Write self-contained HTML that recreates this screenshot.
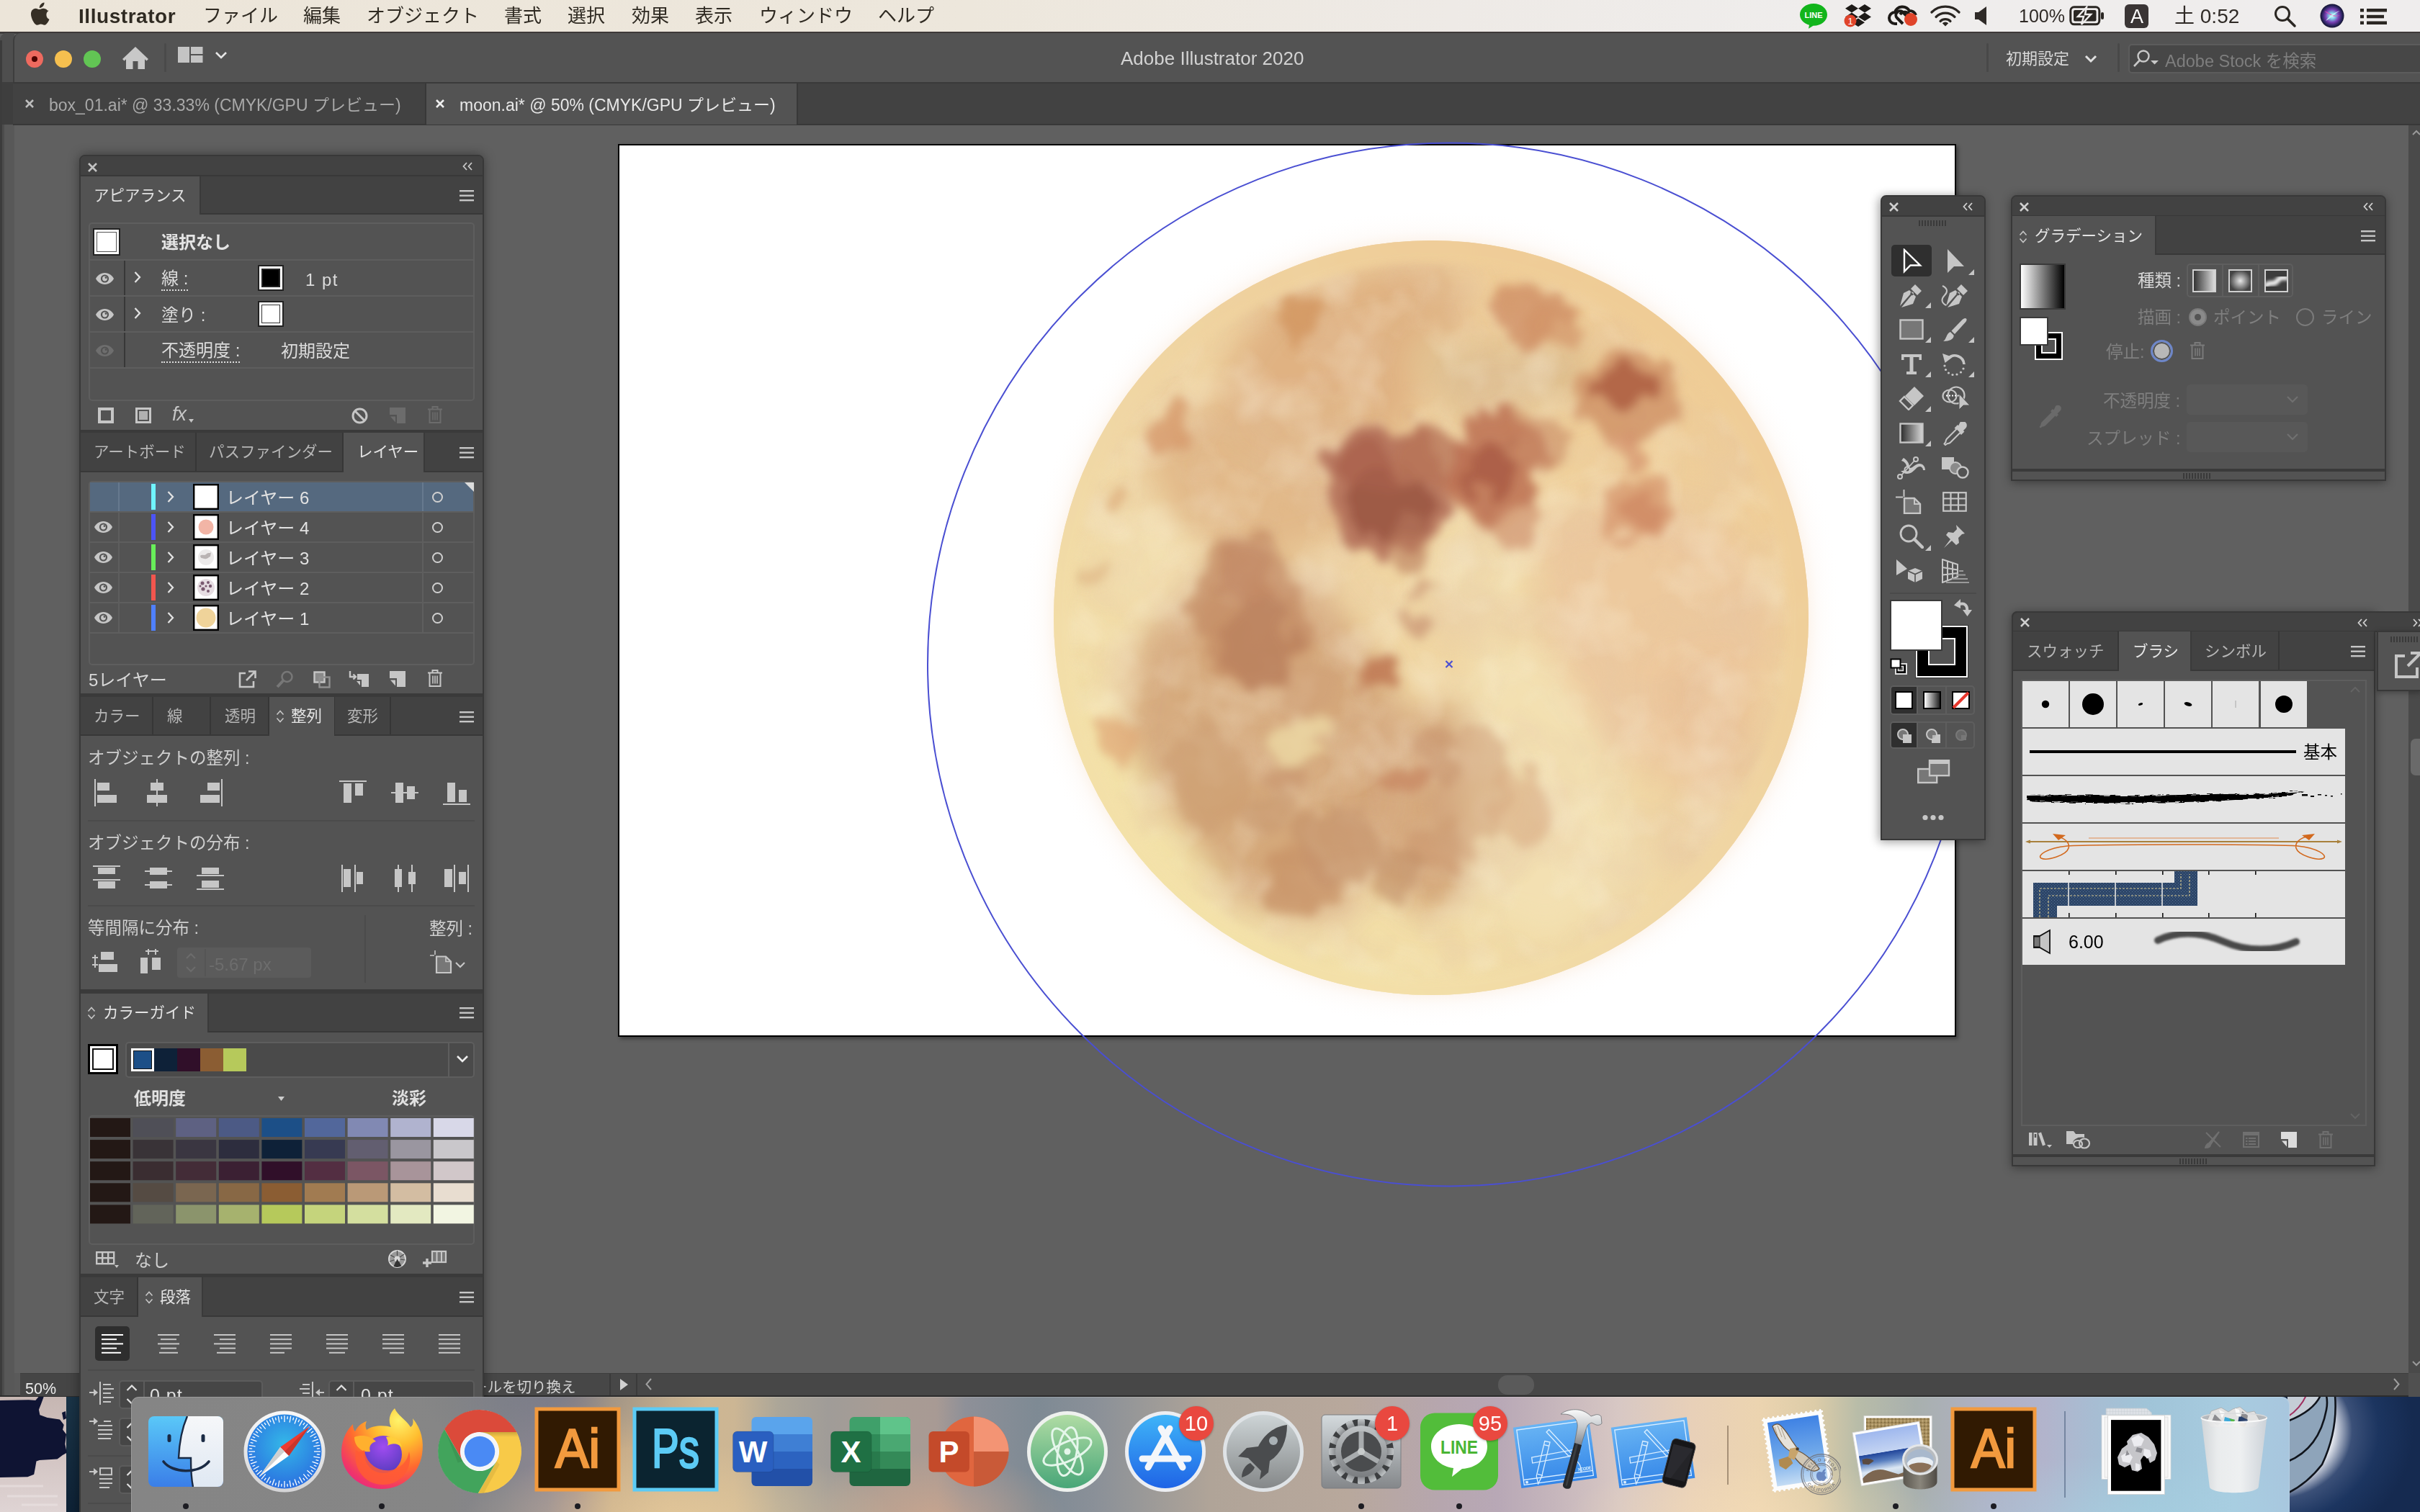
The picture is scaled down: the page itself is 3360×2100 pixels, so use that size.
<!DOCTYPE html>
<html lang="ja"><head><meta charset="utf-8"><title>Adobe Illustrator 2020</title>
<style>
html,body{margin:0;padding:0}
body{width:3360px;height:2100px;overflow:hidden;position:relative;background:#606060;font-family:"Liberation Sans","Noto Sans CJK JP",sans-serif;-webkit-font-smoothing:antialiased}
div,span,svg{position:absolute;box-sizing:border-box}
.t{white-space:nowrap;will-change:transform}
.pn{background:#535353;border:2px solid #383838;box-shadow:0 0 14px rgba(0,0,0,.35)}
.hd{background:#424242;border-bottom:2px solid #383838}
.tabs{background:#424242;border-bottom:2px solid #383838}
.tab{background:#424242;border-right:2px solid #3a3a3a;border-bottom:2px solid #383838;height:100%;top:0}
.tab.on{background:#535353;border-bottom:0}
.bx{border:2px solid #626262;border-radius:5px}
.ln{background:#4a4a4a}
</style>
</head>
<body>
<div style="left:0px;top:1938px;width:3360px;height:162px;background:#14243f;"></div>
<svg style="left:0px;top:1938px;" width="112" height="162" viewBox="0 0 112 162">
<defs><linearGradient id="wl" x1="0" y1="0" x2="0" y2="1"><stop offset="0" stop-color="#c6b6b2"/><stop offset=".5" stop-color="#d2c4c2"/><stop offset="1" stop-color="#dfd4d4"/></linearGradient><linearGradient id="wn" x1="0" y1="0" x2="0" y2="1"><stop offset="0" stop-color="#1a3447"/><stop offset="1" stop-color="#0e2236"/></linearGradient></defs>
<rect width="112" height="162" fill="url(#wl)"/>
<rect x="92" width="20" height="162" fill="url(#wn)"/>
<path d="M0 8.100L39.700 7.300 49.600 8.100 54.500 2.300 59.500 2.300 56.200 11.400 52.900 19.700 54.500 28 66.100 32.100 82.600 34.600 87.600 41.200 86 47.800 91 54.400 89.300 67.600 91.700 79.200 86 82.500 79.300 87.500 54.500 89.100 49.600 90.800 47.900 100.700 46.300 109 38 112.300 0 113.100Z" fill="#0f1433" stroke="#0f1433" stroke-width="2" stroke-linejoin="round"/>
<path d="M86 24l5 -2l1 10l-4 2z" fill="#0f1433"/>
<path d="M0 126h60M10 140h70M30 152h50" stroke="#ebe3e3" stroke-width="3" opacity=".6"/>
</svg>
<svg style="left:3176px;top:1938px;" width="184" height="162" viewBox="0 0 184 162">
<defs><radialGradient id="wg" cx="-0.1" cy="0.300" r="1.050"><stop offset="0" stop-color="#e8ecf2"/><stop offset=".42" stop-color="#eceef4"/><stop offset=".56" stop-color="#3b5078"/><stop offset=".75" stop-color="#1c3560"/><stop offset="1" stop-color="#152a50"/></radialGradient></defs>
<rect width="184" height="162" fill="url(#wg)"/>
<path d="M0 0 L66 0 Q70 50 48 96 Q28 122 0 136 Z" fill="#8ea4ba"/>
<path d="M0 0 L46 0 Q36 22 0 36 Z" fill="#c5cdd6"/>
<path d="M0 36 Q36 22 46 0 M0 92 Q44 74 54 20 Q56 10 54 0 M0 136 Q28 122 48 96 Q70 50 66 0" fill="none" stroke="#10141c" stroke-width="2.600"/>
<path d="M0 30 Q18 18 26 0" fill="none" stroke="#a03060" stroke-width="2"/>
</svg>
<div style="left:0px;top:0px;width:3360px;height:44px;background:linear-gradient(90deg,#ece5d9 0,#ede7dc 40%,#eeeae6 60%,#efedec 75%,#efeded 100%);"></div>
<div style="left:0px;top:44px;width:3360px;height:3px;background:linear-gradient(#3a3332,#444);"></div>
<svg style="left:42px;top:3px;" width="28" height="34" viewBox="0 0 28 34"><path d="M19.2 5.4c1.3-1.6 2.2-3.7 1.9-5.4-1.9.1-4.100 1.300-5.400 2.900-1.200 1.400-2.200 3.500-1.900 5.400 2.100.1 4.100-1.200 5.400-2.900zM24.600 24.300c-.9 2-1.400 2.900-2.500 4.700-1.600 2.500-3.900 5.500-6.700 5.500-2.500 0-3.100-1.600-6.500-1.600-3.400 0-4.100 1.600-6.600 1.600" fill="none"/><path d="M20.900 0c.2 1.900-.6 3.800-1.700 5.200-1.200 1.500-3.200 2.700-5.100 2.600-.3-1.900.6-3.800 1.700-5.100C17 1.200 19.200.1 20.900 0zM27.300 11.600c-.3.200-3.400 2-3.400 5.900 0 4.600 4 6.200 4.100 6.200 0 .1-.6 2.200-2.100 4.400-1.300 1.900-2.700 3.800-4.800 3.800-2.100 0-2.700-1.200-5.100-1.200-2.400 0-3.200 1.300-5.100 1.300-2.100 0-3.600-2-4.900-3.900C3.300 24.200 2 19.200 2 16.400c0-5.200 3.400-8 6.700-8 2.100 0 3.800 1.400 5.100 1.400 1.300 0 3.200-1.500 5.600-1.500.9 0 4.200.1 6.400 3.200z" fill="#362f25" transform="translate(-1,0.5) scale(0.98)"/></svg>
<span class="t" style="top:2.0px;font-size:28px;line-height:42px;color:#2f2a22;font-weight:700;letter-spacing:0.55px;left:109px;">Illustrator</span>
<span class="t" style="top:3.0px;font-size:26px;line-height:39px;color:#2f2a22;left:282px;">ファイル</span>
<span class="t" style="top:3.0px;font-size:26px;line-height:39px;color:#2f2a22;left:421px;">編集</span>
<span class="t" style="top:3.0px;font-size:26px;line-height:39px;color:#2f2a22;left:509px;">オブジェクト</span>
<span class="t" style="top:3.0px;font-size:26px;line-height:39px;color:#2f2a22;left:700px;">書式</span>
<span class="t" style="top:3.0px;font-size:26px;line-height:39px;color:#2f2a22;left:788px;">選択</span>
<span class="t" style="top:3.0px;font-size:26px;line-height:39px;color:#2f2a22;left:877px;">効果</span>
<span class="t" style="top:3.0px;font-size:26px;line-height:39px;color:#2f2a22;left:965px;">表示</span>
<span class="t" style="top:3.0px;font-size:26px;line-height:39px;color:#2f2a22;left:1054px;">ウィンドウ</span>
<span class="t" style="top:3.0px;font-size:26px;line-height:39px;color:#2f2a22;left:1219px;">ヘルプ</span>
<svg style="left:2498px;top:4px;" width="40" height="36" viewBox="0 0 40 36"><path d="M20 1C9.500 1 1 7.800 1 16.200c0 6.700 5.400 12.300 13 14.500l-1 5 6.500-4c.2 0 .3 0 .5 0 10.500 0 19-6.800 19-15.500C39 7.800 30.500 1 20 1z" fill="#12b51c"/><text x="20" y="20.500" font-family="Liberation Sans,sans-serif" font-weight="700" font-size="11" fill="#fff" text-anchor="middle">LINE</text></svg>
<svg style="left:2560px;top:5px;" width="40" height="34" viewBox="0 0 40 34"><g fill="#1d1a17"><path d="M11 1l9 5.800-9 5.800-9-5.800zM29 1l9 5.800-9 5.800-9-5.800zM2 18.400l9-5.800 9 5.800-9 5.800zM29 12.600l9 5.800-9 5.800-9-5.800zM11 26.200l9-5.800 9 5.800-9 5.800z"/></g><circle cx="9" cy="24" r="8.500" fill="#e0442a"/><text x="9" y="29" font-family="Liberation Sans,sans-serif" font-size="13" fill="#fff" text-anchor="middle">1</text></svg>
<svg style="left:2620px;top:6px;" width="44" height="32" viewBox="0 0 44 32"><g fill="none" stroke="#1d1a17" stroke-width="4"><path d="M14 27h-3a8 8 0 0 1 0-16 11 11 0 0 1 20-2 9 9 0 0 1 9 6"/><path d="M22 27l-8-8a5.500 5.500 0 0 1 8-8l6 6"/><path d="M18 14a8 8 0 0 1 14 2"/></g><circle cx="33" cy="21" r="9" fill="#e0442a"/></svg>
<svg style="left:2680px;top:6px;" width="42" height="32" viewBox="0 0 42 32"><g fill="none" stroke="#2a2622" stroke-width="3.200" stroke-linecap="round"><path d="M2 11a27 27 0 0 1 38 0"/><path d="M8 17.500a18.500 18.500 0 0 1 26 0"/><path d="M14 23.500a10 10 0 0 1 14 0"/></g><path d="M21 30.500l-4.200-4.300a6 6 0 0 1 8.400 0z" fill="#2a2622"/></svg>
<svg style="left:2741px;top:9px;" width="20" height="26" viewBox="0 0 20 26"><path d="M1 8h5l11-8v26l-11-8h-5z" fill="#2f2b28"/></svg>
<span class="t" style="top:4.0px;font-size:25px;line-height:37px;color:#2f2a26;left:2803px;">100%</span>
<svg style="left:2873px;top:8px;" width="50" height="28" viewBox="0 0 50 28"><rect x="1.800" y="1.800" width="40" height="24" rx="5" fill="none" stroke="#2a2622" stroke-width="3"/><rect x="44" y="9" width="4" height="10" rx="2" fill="#2a2622"/><rect x="6" y="6" width="31.500" height="15.500" rx="2" fill="#2a2622"/><path d="M24 2l-12 13h8l-3 11 13-14h-8z" fill="#2a2622" stroke="#efedec" stroke-width="2.500"/></svg>
<div style="left:2950px;top:6px;width:33px;height:33px;background:#3a3535;border-radius:6px"></div>
<span class="t" style="top:2.5px;font-size:27px;line-height:40px;color:#fff;left:2966.5px;transform:translateX(-50%);">A</span>
<span class="t" style="top:1.5px;font-size:28px;line-height:42px;color:#2f2a26;left:3019px;">土 0:52</span>
<svg style="left:3157px;top:7px;" width="32" height="32" viewBox="0 0 32 32"><circle cx="12" cy="12" r="9.500" fill="none" stroke="#2a2622" stroke-width="3"/><path d="M19 19l10 10" stroke="#2a2622" stroke-width="3.500" stroke-linecap="round"/></svg>
<svg style="left:3221px;top:5px;" width="34" height="34" viewBox="0 0 34 34"><defs><radialGradient id="sr" cx=".5" cy=".5" r=".5"><stop offset="0" stop-color="#e8f4ff"/><stop offset=".25" stop-color="#7fd0e8"/><stop offset=".55" stop-color="#7a3fb4"/><stop offset=".85" stop-color="#27235c"/><stop offset="1" stop-color="#15132e"/></radialGradient></defs><circle cx="17" cy="17" r="16.500" fill="url(#sr)"/><path d="M6 10c6 2 14 9 22 6-6 4-14 1-22-6z" fill="#e850b0" opacity=".8"/><path d="M8 24c6-8 12-12 20-14-8 4-12 10-20 14z" fill="#c8f4f4" opacity=".85"/></svg>
<svg style="left:3277px;top:11px;" width="38" height="24" viewBox="0 0 38 24"><g fill="#2a2622"><rect x="0" y="1" width="5" height="4.500"/><rect x="9" y="1" width="28" height="4.500"/><rect x="0" y="9.800" width="5" height="4.500"/><rect x="9" y="9.800" width="24" height="4.500"/><rect x="0" y="18.500" width="5" height="4.500"/><rect x="9" y="18.500" width="28" height="4.500"/></g></svg>
<div style="left:0px;top:46px;width:20px;height:1894px;background:#585858;border-radius:9px 0 0 0"></div>
<div style="left:0px;top:46px;width:20px;height:68px;background:#4e4e4e;border-radius:9px 0 0 0"></div>
<div style="left:0px;top:114px;width:20px;height:59px;background:#3e3e3e;"></div>
<div style="left:0px;top:56px;width:3px;height:1884px;background:#3c3c3c;"></div>
<div style="left:3px;top:173px;width:3px;height:1767px;background:#4c4c4c;"></div>
<div style="left:18px;top:46px;width:3342px;height:69px;background:#535353;border-radius:10px 0 0 0;border-left:2px solid #3e3e3e"></div>
<div style="left:18px;top:114px;width:3342px;height:59px;background:#424242;border-top:2px solid #3a3a3a"></div>
<div style="left:18px;top:172px;width:3342px;height:2px;background:#383838;"></div>
<div style="left:36px;top:70px;width:24px;height:24px;background:#ee6a5f;border-radius:50%"></div>
<div style="left:44px;top:78px;width:8px;height:8px;background:#4d0400;border-radius:50%"></div>
<div style="left:76px;top:70px;width:24px;height:24px;background:#f5bf4f;border-radius:50%"></div>
<div style="left:116px;top:70px;width:24px;height:24px;background:#62c554;border-radius:50%"></div>
<svg style="left:169px;top:64px;" width="38" height="33" viewBox="0 0 38 33"><path d="M19 1L1 18l2.500 2.600L6 18.300V32h9.500V21h7v11H32V18.300l2.500 2.300L37 18z" fill="#c8c8c8"/></svg>
<div style="left:228px;top:60px;width:3px;height:40px;background:#4a4a4a;border-radius:2px"></div>
<svg style="left:247px;top:65px;" width="36" height="24" viewBox="0 0 36 24"><g fill="#c4c4c4"><rect x="0" y="0" width="16" height="22"/><rect x="18" y="0" width="16.500" height="10"/><rect x="18" y="12" width="16.500" height="10"/></g></svg>
<svg style="left:298px;top:71px;" width="18" height="12" viewBox="0 0 18 12"><path d="M2 2l7 7 7-7" fill="none" stroke="#e6e6e6" stroke-width="2.600"/></svg>
<span class="t" style="top:61.5px;font-size:26px;line-height:39px;color:#d2d2d2;left:1556px;">Adobe Illustrator 2020</span>
<div style="left:2758px;top:60px;width:3px;height:40px;background:#484848;border-radius:2px"></div>
<span class="t" style="top:65.0px;font-size:22px;line-height:33px;color:#d8d8d8;left:2785px;">初期設定</span>
<svg style="left:2894px;top:76px;" width="18" height="13" viewBox="0 0 18 13"><path d="M2 2l7 7 7-7" fill="none" stroke="#e0e0e0" stroke-width="3"/></svg>
<div style="left:2940px;top:60px;width:3px;height:40px;background:#484848;border-radius:2px"></div>
<div style="left:2955px;top:61px;width:420px;height:41px;background:#474747;border:2px solid #5c5c5c;border-radius:5px"></div>
<svg style="left:2962px;top:69px;" width="36" height="26" viewBox="0 0 36 26"><circle cx="14" cy="9" r="7.500" fill="none" stroke="#c8c8c8" stroke-width="2.400"/><path d="M9 14.500L1 23" stroke="#c8c8c8" stroke-width="2.600"/><path d="M24 15h11l-5.500 5.500z" fill="#c8c8c8"/></svg>
<span class="t" style="top:67.5px;font-size:23.5px;line-height:35px;color:#7e7e7e;left:3006px;">Adobe Stock を検索</span>
<div style="left:20px;top:116px;width:754px;height:56px;background:#424242;border-right:2px solid #383838"></div>
<div style="left:590px;top:116px;width:518px;height:57px;background:#535353;border-right:2px solid #383838;border-left:2px solid #383838"></div>
<svg style="left:35px;top:138px;" width="12" height="12" viewBox="0 0 12 12"><path d="M1 1l10 10M11 1L1 11" stroke="#bdbdbd" stroke-width="2.600"/></svg>
<span class="t" style="top:129.0px;font-size:23px;line-height:34px;color:#a9a9a9;left:68px;">box_01.ai* @ 33.33% (CMYK/GPU プレビュー)</span>
<svg style="left:605px;top:138px;" width="12" height="12" viewBox="0 0 12 12"><path d="M1 1l10 10M11 1L1 11" stroke="#f0f0f0" stroke-width="2.600"/></svg>
<span class="t" style="top:129.0px;font-size:23px;line-height:34px;color:#e8e8e8;left:638px;">moon.ai* @ 50% (CMYK/GPU プレビュー)</span>
<div style="left:20px;top:174px;width:3324px;height:1733px;overflow:hidden"><div style="left:838px;top:26px;width:1858px;height:1240px;background:#fff;border:2px solid #000;box-shadow:3px 3px 5px rgba(0,0,0,.35)"></div><svg style="left:1380px;top:96px" width="1180" height="1180" viewBox="1400 270 1180 1180">
<defs>
<radialGradient id="mg" cx="1987" cy="858" r="570" gradientUnits="userSpaceOnUse"><stop offset="0" stop-color="#f8e2cc" stop-opacity=".4"/><stop offset=".915" stop-color="#f8e2cc" stop-opacity=".4"/><stop offset=".945" stop-color="#faeade" stop-opacity=".16"/><stop offset="1" stop-color="#fff" stop-opacity="0"/></radialGradient>
<linearGradient id="mb" x1="2300" y1="450" x2="1600" y2="1300" gradientUnits="userSpaceOnUse"><stop offset="0" stop-color="#efcc96"/><stop offset=".5" stop-color="#f0d6a4"/><stop offset="1" stop-color="#f4e3aa"/></linearGradient>
<clipPath id="mc"><circle cx="1987" cy="858" r="524"/></clipPath>
<filter id="bl1" x="-10%" y="-10%" width="120%" height="120%"><feGaussianBlur stdDeviation="22"/></filter>
<filter id="bl2" x="-10%" y="-10%" width="120%" height="120%"><feTurbulence type="fractalNoise" baseFrequency=".022" numOctaves="3" seed="7" result="n"/><feDisplacementMap in="SourceGraphic" in2="n" scale="70" xChannelSelector="R" yChannelSelector="G" result="d"/><feGaussianBlur in="d" stdDeviation="7"/></filter>
<filter id="bl3" x="-5%" y="-5%" width="110%" height="110%"><feGaussianBlur stdDeviation="6"/></filter>
<filter id="cl" x="0" y="0" width="100%" height="100%"><feTurbulence type="fractalNoise" baseFrequency=".009" numOctaves="3" seed="11"/><feColorMatrix type="matrix" values="0 0 0 0 .78  0 0 0 0 .56  0 0 0 0 .38  1.600 0 0 0 -.62"/></filter>
<filter id="cl2" x="0" y="0" width="100%" height="100%"><feTurbulence type="fractalNoise" baseFrequency=".012" numOctaves="3" seed="23"/><feColorMatrix type="matrix" values="0 0 0 0 .97  0 0 0 0 .91  0 0 0 0 .74  0 1.600 0 0 -.7"/></filter>
</defs>
<circle cx="1987" cy="858" r="570" fill="url(#mg)"/>
<circle cx="1987" cy="858" r="524" fill="url(#mb)"/>
<g clip-path="url(#mc)"><g filter="url(#bl1)"><path d="M1776 408 L1954 363 L2024 393 L2044 448 L1954 478 L1974 567 L1905 626 L1815 656 L1726 616 L1687 547 L1726 468Z" fill="#deb081" opacity="0.95"/><path d="M1657 567 L1875 547 L1974 636 L1875 745 L1736 785 L1627 726 L1587 626Z" fill="#e0b686" opacity="0.9"/><path d="M1587 874 L1677 775 L1815 795 L1895 894 L1954 993 L1944 1152 L1855 1271 L1726 1261 L1617 1152 L1558 1013Z" fill="#d2a478" opacity="0.92"/><path d="M1875 1033 L2014 973 L2113 1033 L2153 1132 L2093 1231 L1974 1271 L1895 1192Z" fill="#d0a074" opacity="0.85"/><path d="M2133 735 L2252 696 L2411 735 L2470 874 L2430 1033 L2331 1093 L2212 1033 L2153 894Z" fill="#ebc49c" opacity="0.62"/><path d="M2053 874 L2153 914 L2232 1033 L2292 1212 L2153 1311 L2044 1261 L2024 1073Z" fill="#f2e0b2" opacity="0.95"/><path d="M1488 934 L1587 1073 L1726 1271 L1895 1370 L1994 1383 L1756 1331 L1558 1152 L1473 973Z" fill="#f4e3aa" opacity="0.9"/><path d="M1558 696 L1657 735 L1677 815 L1597 874 L1518 815Z" fill="#f2dfb0" opacity="0.8"/><path d="M1994 735 L2093 716 L2133 795 L2073 874 L1994 854Z" fill="#f2e0b0" opacity="0.8"/><path d="M1954 478 L2212 478 L2192 557 L2014 577Z" fill="#d9ba8c" opacity="0.8"/><path d="M2311 934 L2411 914 L2430 1073 L2351 1132Z" fill="#e8bc92" opacity="0.7"/></g><rect x="1440" y="320" width="1100" height="1080" filter="url(#cl)" opacity=".55"/><rect x="1440" y="320" width="1100" height="1080" filter="url(#cl2)" opacity=".5"/><g filter="url(#bl2)"><ellipse cx="1801" cy="443" rx="22" ry="36" fill="#d2955f" opacity="0.8" transform="rotate(-20 1801 443)"/><ellipse cx="1629" cy="587" rx="20" ry="40" fill="#d6996a" opacity="0.8" transform="rotate(25 1629 587)"/><ellipse cx="1558" cy="696" rx="12" ry="26" fill="#dca878" opacity="0.7" transform="rotate(15 1558 696)"/><ellipse cx="1520" cy="795" rx="12" ry="22" fill="#dcb080" opacity="0.6" transform="rotate(15 1520 795)"/><ellipse cx="2123" cy="433" rx="62" ry="42" fill="#cc8860" opacity="0.72" transform="rotate(15 2123 433)"/><ellipse cx="2153" cy="458" rx="40" ry="26" fill="#d29468" opacity="0.7" transform="rotate(20 2153 458)"/><ellipse cx="1999" cy="413" rx="18" ry="38" fill="#dfb585" opacity="0.7" transform="rotate(0 1999 413)"/><ellipse cx="2262" cy="549" rx="72" ry="64" fill="#d09468" opacity="0.85" transform="rotate(-20 2262 549)"/><ellipse cx="2255" cy="542" rx="36" ry="32" fill="#b06244" opacity="0.9" transform="rotate(-20 2255 542)"/><ellipse cx="2267" cy="631" rx="30" ry="30" fill="#d69670" opacity="0.75" transform="rotate(0 2267 631)"/><ellipse cx="2272" cy="706" rx="52" ry="40" fill="#d6966e" opacity="0.75" transform="rotate(-10 2272 706)"/><ellipse cx="2276" cy="712" rx="28" ry="20" fill="#cc8460" opacity="0.65" transform="rotate(-10 2276 712)"/><ellipse cx="1923" cy="681" rx="88" ry="92" fill="#b4705a" opacity="0.9" transform="rotate(-25 1923 681)"/><ellipse cx="1931" cy="696" rx="50" ry="56" fill="#9a5543" opacity="0.85" transform="rotate(-25 1931 696)"/><ellipse cx="1895" cy="646" rx="40" ry="34" fill="#a8604a" opacity="0.7" transform="rotate(0 1895 646)"/><ellipse cx="1989" cy="641" rx="56" ry="40" fill="#b87458" opacity="0.8" transform="rotate(0 1989 641)"/><ellipse cx="1954" cy="760" rx="30" ry="40" fill="#b87a5c" opacity="0.6" transform="rotate(10 1954 760)"/><ellipse cx="2077" cy="648" rx="66" ry="72" fill="#bc7052" opacity="0.85" transform="rotate(10 2077 648)"/><ellipse cx="2073" cy="654" rx="36" ry="42" fill="#a85a42" opacity="0.8" transform="rotate(10 2073 654)"/><ellipse cx="2133" cy="616" rx="40" ry="40" fill="#c88a66" opacity="0.6" transform="rotate(0 2133 616)"/><ellipse cx="2101" cy="731" rx="30" ry="30" fill="#d09470" opacity="0.7" transform="rotate(0 2101 731)"/><ellipse cx="1736" cy="850" rx="78" ry="108" fill="#c0845e" opacity="0.62" transform="rotate(-10 1736 850)"/><ellipse cx="1748" cy="899" rx="48" ry="60" fill="#b47856" opacity="0.5" transform="rotate(0 1748 899)"/><ellipse cx="1726" cy="805" rx="40" ry="44" fill="#b87858" opacity="0.4" transform="rotate(0 1726 805)"/><ellipse cx="1801" cy="1033" rx="42" ry="24" fill="#ecd8a4" opacity="0.8" transform="rotate(-35 1801 1033)"/><ellipse cx="1786" cy="1085" rx="30" ry="26" fill="#c8946c" opacity="0.7" transform="rotate(0 1786 1085)"/><ellipse cx="1809" cy="1223" rx="54" ry="48" fill="#c89468" opacity="0.8" transform="rotate(35 1809 1223)"/><ellipse cx="1947" cy="1085" rx="28" ry="24" fill="#c88a64" opacity="0.8" transform="rotate(0 1947 1085)"/><ellipse cx="1923" cy="934" rx="24" ry="22" fill="#c07a54" opacity="0.9" transform="rotate(0 1923 934)"/><ellipse cx="1958" cy="869" rx="18" ry="18" fill="#cc9a78" opacity="0.8" transform="rotate(0 1958 869)"/><ellipse cx="1984" cy="821" rx="16" ry="16" fill="#cc9a78" opacity="0.8" transform="rotate(0 1984 821)"/><ellipse cx="1548" cy="1031" rx="22" ry="38" fill="#e0a878" opacity="0.7" transform="rotate(-20 1548 1031)"/><ellipse cx="1984" cy="1175" rx="30" ry="42" fill="#cc9870" opacity="0.7" transform="rotate(0 1984 1175)"/><ellipse cx="2044" cy="1097" rx="50" ry="90" fill="#d0a27a" opacity="0.6" transform="rotate(10 2044 1097)"/><ellipse cx="2113" cy="1122" rx="36" ry="56" fill="#d8ac84" opacity="0.6" transform="rotate(-20 2113 1122)"/><ellipse cx="1855" cy="1172" rx="64" ry="50" fill="#c4926a" opacity="0.65" transform="rotate(20 1855 1172)"/><ellipse cx="1677" cy="1073" rx="54" ry="74" fill="#cc9c72" opacity="0.6" transform="rotate(-20 1677 1073)"/><ellipse cx="1944" cy="1212" rx="40" ry="36" fill="#c08c64" opacity="0.6" transform="rotate(0 1944 1212)"/><ellipse cx="1756" cy="1132" rx="36" ry="30" fill="#c89870" opacity="0.5" transform="rotate(0 1756 1132)"/><ellipse cx="1994" cy="1053" rx="34" ry="30" fill="#c4906a" opacity="0.55" transform="rotate(0 1994 1053)"/><ellipse cx="1815" cy="954" rx="40" ry="36" fill="#d0a078" opacity="0.5" transform="rotate(0 1815 954)"/></g>
<circle cx="1984" cy="862" r="520" fill="none" stroke="url(#mb)" stroke-width="44" opacity=".92" filter="url(#bl3)"/></g>
</svg><svg style="left:0;top:0" width="3324" height="1733" viewBox="20 174 3324 1733"><circle cx="2012.500" cy="923" r="724.500" fill="none" stroke="#4a4fd2" stroke-width="2"/><path d="M2007.500 918l9 9m0-9l-9 9" stroke="#4a4fd2" stroke-width="2.200"/></svg></div>
<div style="left:3344px;top:174px;width:16px;height:1733px;background:#4a4a4a;"></div>
<div style="left:3347px;top:1026px;width:13px;height:51px;background:#6a6a6a;border-radius:7px 0 0 7px"></div>
<svg style="left:3349px;top:180px;" width="11" height="8" viewBox="0 0 11 8"><path d="M1 7l5-5 5 5" fill="none" stroke="#9a9a9a" stroke-width="2"/></svg>
<svg style="left:3349px;top:1890px;" width="11" height="8" viewBox="0 0 11 8"><path d="M1 1l5 5 5-5" fill="none" stroke="#9a9a9a" stroke-width="2"/></svg>
<div style="left:28px;top:1907px;width:3332px;height:33px;background:#474747;border-top:1px solid #3e3e3e"></div>
<div style="left:20px;top:1907px;width:8px;height:33px;background:#5a5a5a;"></div>
<div style="left:0px;top:1938px;width:3360px;height:2px;background:#2c2c2c;"></div>
<div style="left:28px;top:1908px;width:84px;height:31px;background:#454545;"></div>
<span class="t" style="top:1912.5px;font-size:21.5px;line-height:32px;color:#ececec;left:35px;">50%</span>
<span class="t" style="top:1911.5px;font-size:20.5px;line-height:30px;color:#d4d4d4;left:656px;">ールを切り換え</span>
<div style="left:846px;top:1908px;width:2px;height:30px;background:#3a3a3a;"></div>
<svg style="left:861px;top:1915px;" width="12" height="16" viewBox="0 0 12 16"><path d="M0 0l11 8-11 8z" fill="#d0d0d0"/></svg>
<div style="left:883px;top:1908px;width:2px;height:30px;background:#3a3a3a;"></div>
<svg style="left:896px;top:1914px;" width="10" height="17" viewBox="0 0 10 17"><path d="M8 1L1.500 8.500 8 16" fill="none" stroke="#a0a0a0" stroke-width="2"/></svg>
<svg style="left:3322px;top:1914px;" width="10" height="17" viewBox="0 0 10 17"><path d="M2 1l6.500 7.500L2 16" fill="none" stroke="#a0a0a0" stroke-width="2"/></svg>
<div style="left:2080px;top:1910px;width:50px;height:27px;background:#5a5a5a;border-radius:13px"></div>
<div style="left:3344px;top:1907px;width:16px;height:33px;background:#505050;"></div>
<div style="left:110px;top:215px;width:562px;height:1900px;background:#535353;border:2px solid #383838;border-radius:8px 8px 0 0;box-shadow:0 0 16px rgba(0,0,0,.4)"></div>
<div style="left:112px;top:217px;width:558px;height:28px;background:#424242;border-bottom:2px solid #383838;border-radius:6px 6px 0 0"></div>
<svg style="left:122px;top:226px;" width="13" height="13" viewBox="0 0 13 13"><path d="M1 1l11 11M12 1L1 12" stroke="#c2c2c2" stroke-width="2.600"/></svg>
<svg style="left:642px;top:225px;" width="15" height="12" viewBox="0 0 15 12"><path d="M6 1L1.500 6 6 11M13 1L8.500 6 13 11" fill="none" stroke="#c8c8c8" stroke-width="1.800"/></svg>
<div style="left:112px;top:245px;width:558px;height:53px;background:#424242;border-bottom:2px solid #383838"></div>
<div style="left:112px;top:245px;width:167px;height:53px;background:#535353;border-right:2px solid #3a3a3a"></div>
<span class="t" style="top:255.5px;font-size:21.5px;line-height:32px;color:#e0e0e0;left:130px;">アピアランス</span>
<svg style="left:638px;top:264px;" width="20" height="16" viewBox="0 0 20 16"><g fill="#c6c6c6"><rect y="0" width="20" height="2.400"/><rect y="6.500" width="20" height="2.400"/><rect y="13" width="20" height="2.400"/></g></svg>
<div style="left:123px;top:309px;width:536px;height:248px;border:2px solid #5e5e5e;border-radius:5px"></div>
<div style="left:125px;top:360px;width:532px;height:2px;background:#5e5e5e;"></div>
<div style="left:125px;top:410px;width:532px;height:2px;background:#5e5e5e;"></div>
<div style="left:125px;top:460px;width:532px;height:2px;background:#5e5e5e;"></div>
<div style="left:125px;top:510px;width:532px;height:2px;background:#5e5e5e;"></div>
<div style="left:172px;top:362px;width:2px;height:48px;background:#383838;"></div>
<div style="left:172px;top:412px;width:2px;height:48px;background:#383838;"></div>
<div style="left:172px;top:462px;width:2px;height:48px;background:#383838;"></div>
<div style="left:129px;top:317px;width:38px;height:38px;background:#fff;border:2px solid #222;outline:2px solid #fff;outline-offset:-4px;box-shadow:inset 0 0 0 3px #fff, inset 0 0 0 4px #555"></div>
<span class="t" style="top:319.0px;font-size:24px;line-height:36px;color:#e4e4e4;font-weight:700;left:224px;">選択なし</span>
<svg style="left:133px;top:378.5px;" width="25" height="16" viewBox="0 0 25 16"><path d="M12.500 0C6.500 0 2 4 0 8c2 4 6.500 8 12.500 8S23 12 25 8C23 4 18.500 0 12.500 0z" fill="#c6c6c6"/><circle cx="12.500" cy="8" r="5.600" fill="#535353"/><circle cx="12.500" cy="8" r="3.400" fill="#c6c6c6"/><circle cx="14" cy="6.600" r="1.400" fill="#535353"/></svg>
<svg style="left:186px;top:377px;" width="10" height="16" viewBox="0 0 10 16"><path d="M1.500 1l6.500 7-6.500 7" fill="none" stroke="#e2e2e2" stroke-width="2.300"/></svg>
<span class="t" style="top:370.0px;font-size:24px;line-height:36px;color:#dcdcdc;left:224px;border-bottom:2px dotted #dcdcdc;line-height:30px;height:32px;margin-top:2px">線 :</span>
<div style="left:358px;top:368px;width:36px;height:36px;background:#000;border:2px solid #222;box-shadow:inset 0 0 0 3px #fff, inset 0 0 0 5px #222"></div>
<span class="t" style="top:370.5px;font-size:24px;line-height:36px;color:#dcdcdc;letter-spacing:1.5px;left:424px;">1 pt</span>
<svg style="left:133px;top:428.5px;" width="25" height="16" viewBox="0 0 25 16"><path d="M12.500 0C6.500 0 2 4 0 8c2 4 6.500 8 12.500 8S23 12 25 8C23 4 18.500 0 12.500 0z" fill="#c6c6c6"/><circle cx="12.500" cy="8" r="5.600" fill="#535353"/><circle cx="12.500" cy="8" r="3.400" fill="#c6c6c6"/><circle cx="14" cy="6.600" r="1.400" fill="#535353"/></svg>
<svg style="left:186px;top:427px;" width="10" height="16" viewBox="0 0 10 16"><path d="M1.500 1l6.500 7-6.500 7" fill="none" stroke="#e2e2e2" stroke-width="2.300"/></svg>
<span class="t" style="top:420.0px;font-size:24px;line-height:36px;color:#dcdcdc;left:224px;">塗り :</span>
<div style="left:358px;top:418px;width:36px;height:36px;background:#fff;border:2px solid #222;box-shadow:inset 0 0 0 3px #fff, inset 0 0 0 4px #333"></div>
<svg style="left:133px;top:478.5px;" width="25" height="16" viewBox="0 0 25 16"><path d="M12.500 0C6.500 0 2 4 0 8c2 4 6.500 8 12.500 8S23 12 25 8C23 4 18.500 0 12.500 0z" fill="#6e6e6e"/><circle cx="12.500" cy="8" r="5.600" fill="#535353"/><circle cx="12.500" cy="8" r="3.400" fill="#6e6e6e"/><circle cx="14" cy="6.600" r="1.400" fill="#535353"/></svg>
<span class="t" style="top:470.0px;font-size:24px;line-height:36px;color:#dcdcdc;left:224px;border-bottom:2px dotted #dcdcdc;line-height:30px;height:32px;margin-top:2px">不透明度 :</span>
<span class="t" style="top:470.0px;font-size:24px;line-height:36px;color:#dcdcdc;left:390px;">初期設定</span>
<div style="left:136px;top:566px;width:22px;height:22px;border:4px solid #c6c6c6"></div>
<div style="left:188px;top:566px;width:22px;height:22px;background:#b0b0b0;border:3px solid #c6c6c6;box-shadow:inset 0 0 0 2px #535353"></div>
<span class="t" style="top:555.0px;font-size:27px;line-height:40px;color:#c6c6c6;left:239px;font-style:italic;letter-spacing:-1px">fx</span>
<svg style="left:262px;top:582px;" width="8" height="6" viewBox="0 0 8 6"><path d="M0 0h7l-3.500 5z" fill="#c6c6c6"/></svg>
<svg style="left:488px;top:566px;" width="23" height="23" viewBox="0 0 23 23"><circle cx="11.500" cy="11.500" r="9.500" fill="none" stroke="#c6c6c6" stroke-width="3"/><path d="M5 5l13 13" stroke="#c6c6c6" stroke-width="3"/></svg>
<svg style="left:541px;top:565.5px;" width="22" height="22" viewBox="0 0 22 22"><path d="M0 0h22v22H10V10H0z" fill="#6c6c6c"/><path d="M1 12.500h7v8z" fill="#6c6c6c"/></svg>
<svg style="left:593px;top:563px;" width="22" height="26" viewBox="0 0 22 26"><g fill="none" stroke="#6c6c6c" stroke-width="2"><path d="M1 5.500h20M7.500 5V2h7v3M3.500 6v18h15V6"/><path d="M8 9.500v11M11 9.500v11M14 9.500v11" stroke-width="1.600"/></g></svg>
<div style="left:112px;top:597px;width:558px;height:4px;background:#3a3a3a;"></div>
<div style="left:112px;top:601px;width:558px;height:55px;background:#424242;border-bottom:2px solid #383838"></div>
<div style="left:271px;top:601px;width:2px;height:53px;background:#363636;"></div>
<div style="left:475px;top:601px;width:2px;height:53px;background:#363636;"></div>
<div style="left:477px;top:601px;width:113px;height:55px;background:#535353;border-right:2px solid #3a3a3a"></div>
<span class="t" style="top:612.0px;font-size:21.5px;line-height:32px;color:#b6b6b6;left:130px;">アートボード</span>
<span class="t" style="top:612.0px;font-size:21.5px;line-height:32px;color:#b6b6b6;left:290px;">パスファインダー</span>
<span class="t" style="top:612.0px;font-size:21.5px;line-height:32px;color:#e4e4e4;left:496px;">レイヤー</span>
<svg style="left:638px;top:621px;" width="20" height="16" viewBox="0 0 20 16"><g fill="#c6c6c6"><rect y="0" width="20" height="2.400"/><rect y="6.500" width="20" height="2.400"/><rect y="13" width="20" height="2.400"/></g></svg>
<div style="left:123px;top:668px;width:536px;height:256px;border:2px solid #5e5e5e;border-radius:5px"></div>
<div style="left:125px;top:670px;width:532px;height:41px;background:#55697f;"></div>
<div style="left:125px;top:710px;width:532px;height:2px;background:#5e5e5e;"></div>
<div style="left:164px;top:670px;width:2px;height:40px;background:#66798e;"></div>
<div style="left:586px;top:670px;width:2px;height:40px;background:#66798e;"></div>
<div style="left:210px;top:672px;width:6px;height:36px;background:#70f4ff;"></div>
<svg style="left:232px;top:682px;" width="10" height="16" viewBox="0 0 10 16"><path d="M1.500 1l6.500 7-6.500 7" fill="none" stroke="#e2e2e2" stroke-width="2.300"/></svg>
<svg style="left:268px;top:672px;" width="36" height="36" viewBox="0 0 36 36"><rect x="1.200" y="1.200" width="33.600" height="33.600" fill="#fff" stroke="#000" stroke-width="2.400"/><g transform="translate(2,2)"></g></svg>
<span class="t" style="top:673.5px;font-size:24px;line-height:36px;color:#e2e2e2;left:314px;">レイヤー 6</span>
<div style="left:600px;top:683px;width:15px;height:15px;border:2px solid #d0d0d0;border-radius:50%"></div>
<svg style="left:131px;top:723.5px;" width="25" height="16" viewBox="0 0 25 16"><path d="M12.500 0C6.500 0 2 4 0 8c2 4 6.500 8 12.500 8S23 12 25 8C23 4 18.500 0 12.500 0z" fill="#c6c6c6"/><circle cx="12.500" cy="8" r="5.600" fill="#535353"/><circle cx="12.500" cy="8" r="3.400" fill="#c6c6c6"/><circle cx="14" cy="6.600" r="1.400" fill="#535353"/></svg>
<div style="left:125px;top:752px;width:532px;height:2px;background:#5e5e5e;"></div>
<div style="left:164px;top:712px;width:2px;height:40px;background:#5e5e5e;"></div>
<div style="left:586px;top:712px;width:2px;height:40px;background:#5e5e5e;"></div>
<div style="left:210px;top:714px;width:6px;height:36px;background:#4c54f6;"></div>
<svg style="left:232px;top:724px;" width="10" height="16" viewBox="0 0 10 16"><path d="M1.500 1l6.500 7-6.500 7" fill="none" stroke="#e2e2e2" stroke-width="2.300"/></svg>
<svg style="left:268px;top:714px;" width="36" height="36" viewBox="0 0 36 36"><rect x="1.200" y="1.200" width="33.600" height="33.600" fill="#fff" stroke="#000" stroke-width="2.400"/><g transform="translate(2,2)"><circle cx="16" cy="16" r="10.500" fill="#f2b5a6"/></g></svg>
<span class="t" style="top:715.5px;font-size:24px;line-height:36px;color:#e2e2e2;left:314px;">レイヤー 4</span>
<div style="left:600px;top:725px;width:15px;height:15px;border:2px solid #d0d0d0;border-radius:50%"></div>
<svg style="left:131px;top:765.5px;" width="25" height="16" viewBox="0 0 25 16"><path d="M12.500 0C6.500 0 2 4 0 8c2 4 6.500 8 12.500 8S23 12 25 8C23 4 18.500 0 12.500 0z" fill="#c6c6c6"/><circle cx="12.500" cy="8" r="5.600" fill="#535353"/><circle cx="12.500" cy="8" r="3.400" fill="#c6c6c6"/><circle cx="14" cy="6.600" r="1.400" fill="#535353"/></svg>
<div style="left:125px;top:794px;width:532px;height:2px;background:#5e5e5e;"></div>
<div style="left:164px;top:754px;width:2px;height:40px;background:#5e5e5e;"></div>
<div style="left:586px;top:754px;width:2px;height:40px;background:#5e5e5e;"></div>
<div style="left:210px;top:756px;width:6px;height:36px;background:#68ee5a;"></div>
<svg style="left:232px;top:766px;" width="10" height="16" viewBox="0 0 10 16"><path d="M1.500 1l6.500 7-6.500 7" fill="none" stroke="#e2e2e2" stroke-width="2.300"/></svg>
<svg style="left:268px;top:756px;" width="36" height="36" viewBox="0 0 36 36"><rect x="1.200" y="1.200" width="33.600" height="33.600" fill="#fff" stroke="#000" stroke-width="2.400"/><g transform="translate(2,2)"><circle cx="16" cy="16" r="11" fill="#eceaea"/><path d="M8 14c3-3 6 1 9-3 2-2 5 0 6-2l-1 6c-3 1-4 4-8 3s-5 0-6-4z" fill="#b9b3b3"/></g></svg>
<span class="t" style="top:757.5px;font-size:24px;line-height:36px;color:#e2e2e2;left:314px;">レイヤー 3</span>
<div style="left:600px;top:767px;width:15px;height:15px;border:2px solid #d0d0d0;border-radius:50%"></div>
<svg style="left:131px;top:807.5px;" width="25" height="16" viewBox="0 0 25 16"><path d="M12.500 0C6.500 0 2 4 0 8c2 4 6.500 8 12.500 8S23 12 25 8C23 4 18.500 0 12.500 0z" fill="#c6c6c6"/><circle cx="12.500" cy="8" r="5.600" fill="#535353"/><circle cx="12.500" cy="8" r="3.400" fill="#c6c6c6"/><circle cx="14" cy="6.600" r="1.400" fill="#535353"/></svg>
<div style="left:125px;top:836px;width:532px;height:2px;background:#5e5e5e;"></div>
<div style="left:164px;top:796px;width:2px;height:40px;background:#5e5e5e;"></div>
<div style="left:586px;top:796px;width:2px;height:40px;background:#5e5e5e;"></div>
<div style="left:210px;top:798px;width:6px;height:36px;background:#f2564e;"></div>
<svg style="left:232px;top:808px;" width="10" height="16" viewBox="0 0 10 16"><path d="M1.500 1l6.500 7-6.500 7" fill="none" stroke="#e2e2e2" stroke-width="2.300"/></svg>
<svg style="left:268px;top:798px;" width="36" height="36" viewBox="0 0 36 36"><rect x="1.200" y="1.200" width="33.600" height="33.600" fill="#fff" stroke="#000" stroke-width="2.400"/><g transform="translate(2,2)"><circle cx="16" cy="16" r="12" fill="#e6dde2"/><g fill="#7a5a70"><circle cx="11" cy="10" r="2.500"/><circle cx="19" cy="9" r="2"/><circle cx="22" cy="14" r="2.200"/><circle cx="12" cy="18" r="2.600"/><circle cx="19" cy="21" r="2"/><circle cx="8" cy="14" r="1.500"/><circle cx="16" cy="14" r="1.600"/></g></g></svg>
<span class="t" style="top:799.5px;font-size:24px;line-height:36px;color:#e2e2e2;left:314px;">レイヤー 2</span>
<div style="left:600px;top:809px;width:15px;height:15px;border:2px solid #d0d0d0;border-radius:50%"></div>
<svg style="left:131px;top:849.5px;" width="25" height="16" viewBox="0 0 25 16"><path d="M12.500 0C6.500 0 2 4 0 8c2 4 6.500 8 12.500 8S23 12 25 8C23 4 18.500 0 12.500 0z" fill="#c6c6c6"/><circle cx="12.500" cy="8" r="5.600" fill="#535353"/><circle cx="12.500" cy="8" r="3.400" fill="#c6c6c6"/><circle cx="14" cy="6.600" r="1.400" fill="#535353"/></svg>
<div style="left:125px;top:878px;width:532px;height:2px;background:#5e5e5e;"></div>
<div style="left:164px;top:838px;width:2px;height:40px;background:#5e5e5e;"></div>
<div style="left:586px;top:838px;width:2px;height:40px;background:#5e5e5e;"></div>
<div style="left:210px;top:840px;width:6px;height:36px;background:#4f80ff;"></div>
<svg style="left:232px;top:850px;" width="10" height="16" viewBox="0 0 10 16"><path d="M1.500 1l6.500 7-6.500 7" fill="none" stroke="#e2e2e2" stroke-width="2.300"/></svg>
<svg style="left:268px;top:840px;" width="36" height="36" viewBox="0 0 36 36"><rect x="1.200" y="1.200" width="33.600" height="33.600" fill="#fff" stroke="#000" stroke-width="2.400"/><g transform="translate(2,2)"><circle cx="16" cy="16" r="13.500" fill="#efd39a"/></g></svg>
<span class="t" style="top:841.5px;font-size:24px;line-height:36px;color:#e2e2e2;left:314px;">レイヤー 1</span>
<div style="left:600px;top:851px;width:15px;height:15px;border:2px solid #d0d0d0;border-radius:50%"></div>
<svg style="left:645px;top:670px;" width="13" height="13" viewBox="0 0 13 13"><path d="M0 0h13v13z" fill="#dcdcdc"/></svg>
<span class="t" style="top:927.0px;font-size:24px;line-height:36px;color:#d8d8d8;left:123px;">5レイヤー</span>
<svg style="left:331px;top:931px;" width="25" height="25" viewBox="0 0 25 25"><path d="M10 4H2v19h19v-8" fill="none" stroke="#c6c6c6" stroke-width="2.600"/><path d="M11 14L23 2M14 1.500h9.500V11" fill="none" stroke="#c6c6c6" stroke-width="2.600"/></svg>
<svg style="left:383px;top:931px;" width="25" height="25" viewBox="0 0 25 25"><circle cx="15.500" cy="9" r="7" fill="none" stroke="#777" stroke-width="2.600"/><path d="M10.500 14L2 23" stroke="#777" stroke-width="4"/></svg>
<svg style="left:435px;top:932px;" width="24" height="24" viewBox="0 0 24 24"><rect x="1.500" y="1.500" width="14" height="14" fill="#8a8a8a" stroke="#c6c6c6" stroke-width="2.400"/><rect x="8.500" y="8.500" width="14" height="14" fill="none" stroke="#909090" stroke-width="2.400"/></svg>
<svg style="left:484px;top:932px;" width="28" height="22" viewBox="0 0 28 22"><path d="M12 4h16v18H18V12h-6z" fill="#c6c6c6"/><path d="M11 14h5v6z" fill="#c6c6c6"/><path d="M2 0v8h8M6.500 4.500L10 8l-3.500 3.500" fill="none" stroke="#c6c6c6" stroke-width="2.400"/></svg>
<svg style="left:541px;top:932px;" width="22" height="22" viewBox="0 0 22 22"><path d="M0 0h22v22H10V10H0z" fill="#c6c6c6"/><path d="M1 12.500h7v8z" fill="#c6c6c6"/></svg>
<svg style="left:593px;top:929px;" width="22" height="26" viewBox="0 0 22 26"><g fill="none" stroke="#c6c6c6" stroke-width="2"><path d="M1 5.500h20M7.500 5V2h7v3M3.500 6v18h15V6"/><path d="M8 9.500v11M11 9.500v11M14 9.500v11" stroke-width="1.600"/></g></svg>
<div style="left:112px;top:963px;width:558px;height:5px;background:#3a3a3a;"></div>
<div style="left:112px;top:968px;width:558px;height:54px;background:#424242;border-bottom:2px solid #383838"></div>
<div style="left:211px;top:968px;width:2px;height:52px;background:#363636;"></div>
<div style="left:291px;top:968px;width:2px;height:52px;background:#363636;"></div>
<div style="left:372px;top:968px;width:2px;height:52px;background:#363636;"></div>
<div style="left:463px;top:968px;width:2px;height:52px;background:#363636;"></div>
<div style="left:541px;top:968px;width:2px;height:52px;background:#363636;"></div>
<div style="left:374px;top:968px;width:90px;height:54px;background:#535353;"></div>
<span class="t" style="top:978.5px;font-size:21.5px;line-height:32px;color:#b6b6b6;left:130px;">カラー</span>
<span class="t" style="top:978.5px;font-size:21.5px;line-height:32px;color:#b6b6b6;left:232px;">線</span>
<span class="t" style="top:978.5px;font-size:21.5px;line-height:32px;color:#b6b6b6;left:312px;">透明</span>
<svg style="left:383px;top:985px;" width="12" height="20" viewBox="0 0 12 20"><path d="M1.500 7.500L6 2.500l4.500 5M1.500 12.500L6 17.500l4.500-5" fill="none" stroke="#c6c6c6" stroke-width="1.600"/></svg>
<span class="t" style="top:978.5px;font-size:21.5px;line-height:32px;color:#e4e4e4;left:404px;">整列</span>
<span class="t" style="top:978.5px;font-size:21.5px;line-height:32px;color:#b6b6b6;left:482px;">変形</span>
<svg style="left:638px;top:988px;" width="20" height="16" viewBox="0 0 20 16"><g fill="#c6c6c6"><rect y="0" width="20" height="2.400"/><rect y="6.500" width="20" height="2.400"/><rect y="13" width="20" height="2.400"/></g></svg>
<span class="t" style="top:1035.5px;font-size:23.5px;line-height:35px;color:#cfcfcf;left:121.5px;">オブジェクトの整列 :</span>
<svg style="left:131px;top:1082px;" width="38" height="38" viewBox="0 0 38 38"><g fill="#c6c6c6"><rect x="0" y="0" width="2" height="38"/><rect x="4" y="5" width="17" height="11"/><rect x="4" y="22" width="27" height="11"/></g></svg>
<svg style="left:203px;top:1082px;" width="38" height="38" viewBox="0 0 38 38"><g fill="#c6c6c6"><rect x="14" y="0" width="2" height="38"/><rect x="6" y="5" width="18" height="11"/><rect x="1" y="22" width="28" height="11"/></g></svg>
<svg style="left:277px;top:1082px;" width="38" height="38" viewBox="0 0 38 38"><g fill="#c6c6c6"><rect x="30" y="0" width="2" height="38"/><rect x="11" y="5" width="17" height="11"/><rect x="1" y="22" width="27" height="11"/></g></svg>
<svg style="left:471px;top:1082px;" width="38" height="38" viewBox="0 0 38 38"><g fill="#c6c6c6"><rect x="0" y="2" width="38" height="2"/><rect x="6" y="6" width="11" height="27"/><rect x="22" y="6" width="11" height="17"/></g></svg>
<svg style="left:543px;top:1082px;" width="38" height="38" viewBox="0 0 38 38"><g fill="#c6c6c6"><rect x="0" y="18" width="38" height="2"/><rect x="6" y="5" width="11" height="28"/><rect x="22" y="10" width="11" height="18"/></g></svg>
<svg style="left:615px;top:1082px;" width="38" height="38" viewBox="0 0 38 38"><g fill="#c6c6c6"><rect x="0" y="34" width="38" height="2"/><rect x="6" y="5" width="11" height="27"/><rect x="22" y="15" width="11" height="17"/></g></svg>
<div style="left:122px;top:1139px;width:537px;height:2px;background:#4b4b4b;"></div>
<span class="t" style="top:1153.5px;font-size:23.5px;line-height:35px;color:#cfcfcf;left:121.5px;">オブジェクトの分布 :</span>
<svg style="left:129px;top:1201px;" width="38" height="38" viewBox="0 0 38 38"><g fill="#c6c6c6"><rect x="0" y="1" width="38" height="2"/><rect x="7" y="4" width="24" height="9"/><rect x="0" y="20" width="38" height="2"/><rect x="7" y="23" width="24" height="10"/></g></svg>
<svg style="left:201px;top:1201px;" width="38" height="38" viewBox="0 0 38 38"><g fill="#c6c6c6"><rect x="0" y="8" width="38" height="2"/><rect x="7" y="4" width="24" height="10"/><rect x="0" y="27" width="38" height="2"/><rect x="7" y="23" width="24" height="10"/></g></svg>
<svg style="left:273px;top:1201px;" width="38" height="38" viewBox="0 0 38 38"><g fill="#c6c6c6"><rect x="0" y="14" width="38" height="2"/><rect x="7" y="4" width="24" height="9"/><rect x="0" y="33" width="38" height="2"/><rect x="7" y="22" width="24" height="10"/></g></svg>
<svg style="left:473px;top:1201px;" width="38" height="38" viewBox="0 0 38 38"><g fill="#c6c6c6"><rect x="1" y="0" width="2" height="38"/><rect x="4" y="6" width="10" height="25"/><rect x="19" y="0" width="2" height="38"/><rect x="22" y="10" width="9" height="17"/></g></svg>
<svg style="left:545px;top:1201px;" width="38" height="38" viewBox="0 0 38 38"><g fill="#c6c6c6"><rect x="7" y="0" width="2" height="38"/><rect x="3" y="6" width="10" height="25"/><rect x="26" y="0" width="2" height="38"/><rect x="22" y="10" width="10" height="17"/></g></svg>
<svg style="left:615px;top:1201px;" width="38" height="38" viewBox="0 0 38 38"><g fill="#c6c6c6"><rect x="15" y="0" width="2" height="38"/><rect x="2" y="6" width="11" height="25"/><rect x="34" y="0" width="2" height="38"/><rect x="22" y="10" width="10" height="17"/></g></svg>
<div style="left:122px;top:1257px;width:537px;height:2px;background:#4b4b4b;"></div>
<span class="t" style="top:1271.5px;font-size:23.5px;line-height:35px;color:#cfcfcf;left:121.5px;">等間隔に分布 :</span>
<span class="t" style="top:1272.5px;font-size:23.5px;line-height:35px;color:#cfcfcf;left:596px;">整列 :</span>
<div style="left:506px;top:1271px;width:2px;height:94px;background:#4b4b4b;"></div>
<svg style="left:128px;top:1320px;" width="36" height="34" viewBox="0 0 36 34"><g fill="#c6c6c6"><rect x="3" y="6" width="2" height="18"/><rect x="0" y="9" width="8" height="2"/><rect x="0" y="19" width="8" height="2"/><rect x="12" y="2" width="18" height="11"/><rect x="9" y="19" width="26" height="11"/></g></svg>
<svg style="left:194px;top:1318px;" width="32" height="36" viewBox="0 0 32 36"><g fill="#c6c6c6"><rect x="8" y="2" width="18" height="2"/><rect x="11" y="0" width="2" height="8"/><rect x="21" y="0" width="2" height="8"/><rect x="1" y="12" width="10" height="22"/><rect x="17" y="12" width="12" height="17"/></g></svg>
<div style="left:246px;top:1316px;width:186px;height:42px;background:#5b5b5b;border-radius:4px"></div>
<div style="left:284px;top:1318px;width:2px;height:38px;background:#555;"></div>
<svg style="left:257px;top:1322px;" width="16" height="30" viewBox="0 0 16 30"><path d="M2 9l6-6 6 6M2 21l6 6 6-6" fill="none" stroke="#6c6c6c" stroke-width="2"/></svg>
<span class="t" style="top:1322.0px;font-size:24px;line-height:36px;color:#6d6d6d;left:290px;">-5.67 px</span>
<svg style="left:597px;top:1320px;" width="52" height="34" viewBox="0 0 52 34"><path d="M7 0v6M0 7h6" stroke="#c6c6c6" stroke-width="1.600" fill="none"/><path d="M9 8.500h13l7 7V31H9z" fill="#777" stroke="#c6c6c6" stroke-width="2.200"/><path d="M22 8.500v7h7" fill="none" stroke="#c6c6c6" stroke-width="1.600"/><path d="M36 17l6 6 6-6" fill="none" stroke="#c6c6c6" stroke-width="2.200"/></svg>
<div style="left:112px;top:1374px;width:558px;height:6px;background:#3a3a3a;"></div>
<div style="left:112px;top:1380px;width:558px;height:54px;background:#424242;border-bottom:2px solid #383838"></div>
<div style="left:112px;top:1380px;width:178px;height:54px;background:#535353;border-right:2px solid #3a3a3a"></div>
<svg style="left:121px;top:1397px;" width="12" height="20" viewBox="0 0 12 20"><path d="M1.500 7.500L6 2.500l4.500 5M1.500 12.500L6 17.500l4.500-5" fill="none" stroke="#c6c6c6" stroke-width="1.600"/></svg>
<span class="t" style="top:1390.5px;font-size:21.5px;line-height:32px;color:#e4e4e4;left:143px;">カラーガイド</span>
<svg style="left:638px;top:1399px;" width="20" height="16" viewBox="0 0 20 16"><g fill="#c6c6c6"><rect y="0" width="20" height="2.400"/><rect y="6.500" width="20" height="2.400"/><rect y="13" width="20" height="2.400"/></g></svg>
<div style="left:122px;top:1450px;width:42px;height:42px;background:#fff;border:3px solid #000;box-shadow:inset 0 0 0 3px #fff, inset 0 0 0 5px #111"></div>
<div style="left:174px;top:1447px;width:485px;height:50px;background:#4a4a4a;border:2px solid #5e5e5e;border-radius:5px"></div>
<div style="left:622px;top:1449px;width:2px;height:46px;background:#5e5e5e;"></div>
<svg style="left:633px;top:1465px;" width="18" height="12" viewBox="0 0 18 12"><path d="M2 2l7 7 7-7" fill="none" stroke="#eee" stroke-width="2.600"/></svg>
<div style="left:182px;top:1456px;width:32px;height:32px;background:#1c4f87;border:3px solid #fff;box-shadow:inset 0 0 0 1px #111"></div>
<div style="left:214px;top:1456px;width:32px;height:32px;background:#0e2138;"></div>
<div style="left:246px;top:1456px;width:32px;height:32px;background:#300f29;"></div>
<div style="left:278px;top:1456px;width:32px;height:32px;background:#8b5d33;"></div>
<div style="left:310px;top:1456px;width:32px;height:32px;background:#b6c95b;"></div>
<span class="t" style="top:1507.5px;font-size:24px;line-height:36px;color:#e0e0e0;font-weight:700;left:186px;">低明度</span>
<svg style="left:386px;top:1523px;" width="9" height="7" viewBox="0 0 9 7"><path d="M0 0h9l-4.500 6z" fill="#ccc"/></svg>
<span class="t" style="top:1507.5px;font-size:24px;line-height:36px;color:#e0e0e0;font-weight:700;left:544px;">淡彩</span>
<div style="left:123px;top:1549px;width:536px;height:180px;border:2px solid #5e5e5e;border-radius:5px"></div>
<svg style="left:125px;top:1553px;" width="534" height="148" viewBox="0 0 534 148"><rect x="0.0" y="0.0" width="56" height="26" fill="#231815"/><rect x="59.6" y="0.0" width="56" height="26" fill="#4f4f57"/><rect x="119.2" y="0.0" width="56" height="26" fill="#5e6182"/><rect x="178.8" y="0.0" width="56" height="26" fill="#4c5a85"/><rect x="238.4" y="0.0" width="56" height="26" fill="#1c4f87"/><rect x="298.0" y="0.0" width="56" height="26" fill="#52679b"/><rect x="357.6" y="0.0" width="56" height="26" fill="#8189b3"/><rect x="417.2" y="0.0" width="56" height="26" fill="#b0b3cf"/><rect x="476.8" y="0.0" width="56" height="26" fill="#d8d8e8"/><rect x="0.0" y="30.1" width="56" height="26" fill="#231815"/><rect x="59.6" y="30.1" width="56" height="26" fill="#393337"/><rect x="119.2" y="30.1" width="56" height="26" fill="#3a3641"/><rect x="178.8" y="30.1" width="56" height="26" fill="#2d2d3e"/><rect x="238.4" y="30.1" width="56" height="26" fill="#0e2138"/><rect x="298.0" y="30.1" width="56" height="26" fill="#373a52"/><rect x="357.6" y="30.1" width="56" height="26" fill="#625e70"/><rect x="417.2" y="30.1" width="56" height="26" fill="#9a96a0"/><rect x="476.8" y="30.1" width="56" height="26" fill="#c9c7cb"/><rect x="0.0" y="60.2" width="56" height="26" fill="#231815"/><rect x="59.6" y="60.2" width="56" height="26" fill="#3a2d31"/><rect x="119.2" y="60.2" width="56" height="26" fill="#432c37"/><rect x="178.8" y="60.2" width="56" height="26" fill="#3b2033"/><rect x="238.4" y="60.2" width="56" height="26" fill="#300f29"/><rect x="298.0" y="60.2" width="56" height="26" fill="#532e42"/><rect x="357.6" y="60.2" width="56" height="26" fill="#7b5664"/><rect x="417.2" y="60.2" width="56" height="26" fill="#a8949a"/><rect x="476.8" y="60.2" width="56" height="26" fill="#d1c7c9"/><rect x="0.0" y="90.3" width="56" height="26" fill="#231815"/><rect x="59.6" y="90.3" width="56" height="26" fill="#554b43"/><rect x="119.2" y="90.3" width="56" height="26" fill="#7a6650"/><rect x="178.8" y="90.3" width="56" height="26" fill="#886845"/><rect x="238.4" y="90.3" width="56" height="26" fill="#8b5d33"/><rect x="298.0" y="90.3" width="56" height="26" fill="#a17b51"/><rect x="357.6" y="90.3" width="56" height="26" fill="#ba9977"/><rect x="417.2" y="90.3" width="56" height="26" fill="#d3bda2"/><rect x="476.8" y="90.3" width="56" height="26" fill="#e8ddd0"/><rect x="0.0" y="120.4" width="56" height="26" fill="#231815"/><rect x="59.6" y="120.4" width="56" height="26" fill="#62645a"/><rect x="119.2" y="120.4" width="56" height="26" fill="#8b946c"/><rect x="178.8" y="120.4" width="56" height="26" fill="#a6b26e"/><rect x="238.4" y="120.4" width="56" height="26" fill="#b6c95b"/><rect x="298.0" y="120.4" width="56" height="26" fill="#c5d47c"/><rect x="357.6" y="120.4" width="56" height="26" fill="#d4df9f"/><rect x="417.2" y="120.4" width="56" height="26" fill="#e3e9c1"/><rect x="476.8" y="120.4" width="56" height="26" fill="#f2f5e2"/></svg>
<svg style="left:133px;top:1738px;" width="32" height="24" viewBox="0 0 32 24"><g fill="none" stroke="#c6c6c6" stroke-width="2.400"><rect x="1.200" y="1.200" width="24" height="16"/><path d="M9.200 1v16M17.200 1v16M1 9.200h24"/></g><path d="M26 19h6l-3 4z" fill="#c6c6c6"/></svg>
<span class="t" style="top:1732.5px;font-size:24px;line-height:36px;color:#d0d0d0;left:187px;">なし</span>
<svg style="left:539px;top:1736px;" width="25" height="25" viewBox="0 0 25 25"><circle cx="12.500" cy="12.500" r="11.500" fill="#999" stroke="#d8d8d8" stroke-width="2"/><g stroke="#4a4a4a" stroke-width="1.200"><path d="M12.500 12.500L12.500 1M12.500 12.500L22 6M12.500 12.500L23.500 14M12.500 12.500L18 22.500M12.500 12.500L8 23M12.500 12.500L2 16M12.500 12.500L3 7"/></g><circle cx="12.500" cy="12.500" r="4" fill="#d8d8d8"/><path d="M12.500 12.500L8 23A11.500 11.500 0 0 0 18 22.500z" fill="#333"/></svg>
<svg style="left:587px;top:1736px;" width="34" height="26" viewBox="0 0 34 26"><rect x="13" y="2" width="19" height="15" fill="#777" stroke="#c6c6c6" stroke-width="2.200"/><path d="M19.500 2v15M26 2v15" stroke="#c6c6c6" stroke-width="2"/><path d="M6 12v12M0 18h12" stroke="#c6c6c6" stroke-width="3.400"/></svg>
<div style="left:112px;top:1769px;width:558px;height:5px;background:#3a3a3a;"></div>
<div style="left:112px;top:1774px;width:558px;height:55px;background:#424242;border-bottom:2px solid #383838"></div>
<div style="left:190px;top:1774px;width:2px;height:53px;background:#363636;"></div>
<div style="left:192px;top:1774px;width:90px;height:55px;background:#535353;border-right:2px solid #3a3a3a"></div>
<span class="t" style="top:1785.5px;font-size:21.5px;line-height:32px;color:#b6b6b6;left:130px;">文字</span>
<svg style="left:201px;top:1792px;" width="12" height="20" viewBox="0 0 12 20"><path d="M1.500 7.500L6 2.500l4.500 5M1.500 12.500L6 17.500l4.500-5" fill="none" stroke="#c6c6c6" stroke-width="1.600"/></svg>
<span class="t" style="top:1785.5px;font-size:21.5px;line-height:32px;color:#e4e4e4;left:222px;">段落</span>
<svg style="left:638px;top:1794px;" width="20" height="16" viewBox="0 0 20 16"><g fill="#c6c6c6"><rect y="0" width="20" height="2.400"/><rect y="6.500" width="20" height="2.400"/><rect y="13" width="20" height="2.400"/></g></svg>
<div style="left:132px;top:1842px;width:48px;height:48px;background:#2e2e2e;border-radius:5px"></div>
<svg style="left:140px;top:1853px;" width="32" height="28" viewBox="0 0 32 28"><rect x="1" y="0.0" width="30" height="2" fill="#fff"/><rect x="1" y="6.2" width="21" height="2" fill="#fff"/><rect x="1" y="12.4" width="30" height="2" fill="#fff"/><rect x="1" y="18.6" width="21" height="2" fill="#fff"/><rect x="1" y="24.8" width="27" height="2" fill="#fff"/></svg>
<svg style="left:217.5px;top:1853px;" width="32" height="28" viewBox="0 0 32 28"><rect x="1" y="0.0" width="30" height="2" fill="#c6c6c6"/><rect x="5" y="6.2" width="22" height="2" fill="#c6c6c6"/><rect x="1" y="12.4" width="30" height="2" fill="#c6c6c6"/><rect x="5" y="18.6" width="22" height="2" fill="#c6c6c6"/><rect x="3" y="24.8" width="26" height="2" fill="#c6c6c6"/></svg>
<svg style="left:295.5px;top:1853px;" width="32" height="28" viewBox="0 0 32 28"><rect x="1" y="0.0" width="30" height="2" fill="#c6c6c6"/><rect x="9" y="6.2" width="22" height="2" fill="#c6c6c6"/><rect x="1" y="12.4" width="30" height="2" fill="#c6c6c6"/><rect x="9" y="18.6" width="22" height="2" fill="#c6c6c6"/><rect x="5" y="24.8" width="26" height="2" fill="#c6c6c6"/></svg>
<svg style="left:373.5px;top:1853px;" width="32" height="28" viewBox="0 0 32 28"><rect x="1" y="0.0" width="30" height="2" fill="#c6c6c6"/><rect x="1" y="6.2" width="30" height="2" fill="#c6c6c6"/><rect x="1" y="12.4" width="30" height="2" fill="#c6c6c6"/><rect x="1" y="18.6" width="30" height="2" fill="#c6c6c6"/><rect x="1" y="24.8" width="20" height="2" fill="#c6c6c6"/></svg>
<svg style="left:452px;top:1853px;" width="32" height="28" viewBox="0 0 32 28"><rect x="1" y="0.0" width="30" height="2" fill="#c6c6c6"/><rect x="1" y="6.2" width="30" height="2" fill="#c6c6c6"/><rect x="1" y="12.4" width="30" height="2" fill="#c6c6c6"/><rect x="1" y="18.6" width="30" height="2" fill="#c6c6c6"/><rect x="5" y="24.8" width="22" height="2" fill="#c6c6c6"/></svg>
<svg style="left:530px;top:1853px;" width="32" height="28" viewBox="0 0 32 28"><rect x="1" y="0.0" width="30" height="2" fill="#c6c6c6"/><rect x="1" y="6.2" width="30" height="2" fill="#c6c6c6"/><rect x="1" y="12.4" width="30" height="2" fill="#c6c6c6"/><rect x="1" y="18.6" width="30" height="2" fill="#c6c6c6"/><rect x="11" y="24.8" width="20" height="2" fill="#c6c6c6"/></svg>
<svg style="left:607.5px;top:1853px;" width="32" height="28" viewBox="0 0 32 28"><rect x="1" y="0.0" width="30" height="2" fill="#c6c6c6"/><rect x="1" y="6.2" width="30" height="2" fill="#c6c6c6"/><rect x="1" y="12.4" width="30" height="2" fill="#c6c6c6"/><rect x="1" y="18.6" width="30" height="2" fill="#c6c6c6"/><rect x="1" y="24.8" width="30" height="2" fill="#c6c6c6"/></svg>
<div style="left:122px;top:1902px;width:537px;height:2px;background:#4b4b4b;"></div>
<div style="left:165px;top:1917px;width:200px;height:40px;background:#464646;border:2px solid #5c5c5c;border-radius:5px"></div><div style="left:199px;top:1919px;width:2px;height:36px;background:#5c5c5c;"></div><svg style="left:175px;top:1922px;" width="16" height="30" viewBox="0 0 16 30"><path d="M1.500 9L8 2.500 14.500 9M1.500 21L8 27.500 14.500 21" fill="none" stroke="#e0e0e0" stroke-width="2.200"/></svg>
<span class="t" style="top:1919.5px;font-size:25px;line-height:37px;color:#e0e0e0;letter-spacing:1px;left:208px;">0 pt</span>
<div style="left:456px;top:1917px;width:203px;height:40px;background:#464646;border:2px solid #5c5c5c;border-radius:5px"></div><div style="left:490px;top:1919px;width:2px;height:36px;background:#5c5c5c;"></div><svg style="left:466px;top:1922px;" width="16" height="30" viewBox="0 0 16 30"><path d="M1.500 9L8 2.500 14.500 9M1.500 21L8 27.500 14.500 21" fill="none" stroke="#e0e0e0" stroke-width="2.200"/></svg>
<span class="t" style="top:1919.5px;font-size:25px;line-height:37px;color:#e0e0e0;letter-spacing:1px;left:501px;">0 pt</span>
<svg style="left:124px;top:1919px;" width="34" height="32" viewBox="0 0 34 32"><g fill="#c6c6c6"><rect x="14" y="0" width="2" height="32"/><rect x="19" y="3" width="11" height="2"/><rect x="19" y="9" width="15" height="2"/><rect x="19" y="15" width="11" height="2"/><rect x="19" y="21" width="15" height="2"/><rect x="19" y="27" width="11" height="2"/><rect x="0" y="14" width="8" height="2"/><path d="M6 10l6 5-6 5z"/></g></svg>
<svg style="left:416px;top:1919px;" width="34" height="32" viewBox="0 0 34 32"><g fill="#c6c6c6"><rect x="17" y="0" width="2" height="32"/><rect x="4" y="3" width="10" height="2"/><rect x="0" y="9" width="14" height="2"/><rect x="4" y="15" width="10" height="2"/><rect x="0" y="21" width="14" height="2"/><rect x="4" y="27" width="10" height="2"/><rect x="26" y="14" width="8" height="2"/><path d="M28 10l-6 5 6 5z"/></g></svg>
<div style="left:165px;top:1969px;width:200px;height:40px;background:#464646;border:2px solid #5c5c5c;border-radius:5px"></div><div style="left:199px;top:1971px;width:2px;height:36px;background:#5c5c5c;"></div><svg style="left:175px;top:1974px;" width="16" height="30" viewBox="0 0 16 30"><path d="M1.500 9L8 2.500 14.500 9M1.500 21L8 27.500 14.500 21" fill="none" stroke="#e0e0e0" stroke-width="2.200"/></svg>
<svg style="left:124px;top:1969px;" width="34" height="32" viewBox="0 0 34 32"><g fill="#c6c6c6"><rect x="0" y="4" width="8" height="2"/><path d="M6 0l6 5-6 5z"/><rect x="20" y="4" width="10" height="2"/><rect x="12" y="10" width="20" height="2"/><rect x="12" y="16" width="20" height="2"/><rect x="12" y="22" width="20" height="2"/><rect x="12" y="28" width="18" height="2"/></g></svg>
<div style="left:122px;top:2021px;width:537px;height:2px;background:#4b4b4b;"></div>
<div style="left:165px;top:2035px;width:200px;height:40px;background:#464646;border:2px solid #5c5c5c;border-radius:5px"></div><div style="left:199px;top:2037px;width:2px;height:36px;background:#5c5c5c;"></div><svg style="left:175px;top:2040px;" width="16" height="30" viewBox="0 0 16 30"><path d="M1.500 9L8 2.500 14.500 9M1.500 21L8 27.500 14.500 21" fill="none" stroke="#e0e0e0" stroke-width="2.200"/></svg>
<svg style="left:124px;top:2038px;" width="34" height="32" viewBox="0 0 34 32"><g fill="#c6c6c6"><rect x="0" y="5" width="8" height="2"/><path d="M6 1l6 5-6 5z"/><rect x="15" y="1.200" width="16" height="9" fill="none" stroke="#c6c6c6" stroke-width="2"/><rect x="14" y="15" width="18" height="2"/><rect x="14" y="21" width="18" height="2"/><rect x="14" y="27" width="14" height="2"/></g></svg>
<div style="left:122px;top:2087px;width:537px;height:2px;background:#4b4b4b;"></div>
<div style="left:2611px;top:271px;width:146px;height:896px;background:#535353;border:2px solid #383838;border-radius:8px 8px 0 0;box-shadow:-2px 2px 14px rgba(0,0,0,.4)"></div>
<div style="left:2613px;top:273px;width:142px;height:28px;background:#424242;border-bottom:2px solid #383838;border-radius:6px 6px 0 0"></div><svg style="left:2623px;top:281px;" width="13" height="13" viewBox="0 0 13 13"><path d="M1 1l11 11M12 1L1 12" stroke="#d0d0d0" stroke-width="2.600"/></svg><svg style="left:2725px;top:281px;" width="15" height="12" viewBox="0 0 15 12"><path d="M6 1L1.500 6 6 11M13 1L8.500 6 13 11" fill="none" stroke="#d0d0d0" stroke-width="1.800"/></svg>
<svg style="left:2664px;top:306px;" width="40" height="8" viewBox="0 0 40 8"><rect x="0" y="0" width="2" height="8" fill="#3a3a3a"/><rect x="4" y="0" width="2" height="8" fill="#3a3a3a"/><rect x="8" y="0" width="2" height="8" fill="#3a3a3a"/><rect x="12" y="0" width="2" height="8" fill="#3a3a3a"/><rect x="16" y="0" width="2" height="8" fill="#3a3a3a"/><rect x="20" y="0" width="2" height="8" fill="#3a3a3a"/><rect x="24" y="0" width="2" height="8" fill="#3a3a3a"/><rect x="28" y="0" width="2" height="8" fill="#3a3a3a"/><rect x="32" y="0" width="2" height="8" fill="#3a3a3a"/><rect x="36" y="0" width="2" height="8" fill="#3a3a3a"/></svg>
<div style="left:2626px;top:340px;width:56px;height:44px;background:#2f2f2f;border-radius:5px"></div>
<svg style="left:2642.0px;top:345.0px;" width="28" height="36" viewBox="0 0 28 36"><path d="M2 2v30l8.500-8.500H24z" fill="none" stroke="#fff" stroke-width="2.400" stroke-linejoin="miter"/></svg>
<svg style="left:2702.0px;top:345.0px;" width="28" height="36" viewBox="0 0 28 36"><path d="M2 1v33l9-9h14z" fill="#c6c6c6"/></svg>
<svg style="left:2733px;top:374px;" width="8" height="8" viewBox="0 0 8 8"><path d="M8 0v8H0z" fill="#c6c6c6"/></svg>
<svg style="left:2638.0px;top:394.5px;" width="32" height="32" viewBox="0 0 32 32"><path d="M21 0l9 9-6 6-9-9zM13 8l9 9-4 10L2 32l14-17a2.300 2.300 0 1 0-1.500-1.500L0 30 5 12z" fill="#c6c6c6"/></svg>
<svg style="left:2673px;top:420px;" width="8" height="8" viewBox="0 0 8 8"><path d="M8 0v8H0z" fill="#c6c6c6"/></svg>
<svg style="left:2702.0px;top:394.5px;" width="32" height="32" viewBox="0 0 32 32"><path d="M21 0l9 9-6 6-9-9zM13 8l9 9-4 10L2 32l14-17a2.300 2.300 0 1 0-1.500-1.500L0 30 5 12z" fill="#c6c6c6"/></svg>
<svg style="left:2694px;top:396px;" width="14" height="30" viewBox="0 0 14 30"><path d="M3 1c8 4 7 9 3 13S0 24 8 28" fill="none" stroke="#c6c6c6" stroke-width="2"/></svg>
<svg style="left:2637.0px;top:443.0px;" width="34" height="30" viewBox="0 0 34 30"><rect x="1.500" y="1.500" width="31" height="26" fill="#777" stroke="#c6c6c6" stroke-width="2.400"/></svg>
<svg style="left:2673px;top:468px;" width="8" height="8" viewBox="0 0 8 8"><path d="M8 0v8H0z" fill="#c6c6c6"/></svg>
<svg style="left:2697.0px;top:441.0px;" width="34" height="34" viewBox="0 0 34 34"><path d="M33 1.500c1.500 1.500 0 4-2 6L17 23l-4.500-4.500L27 3.500c2-2 4.500-3.500 6-2zM11 20l4.500 4.500c1 5-5 8.500-14.500 8.500 5-3 4-11 10-13z" fill="#c6c6c6"/></svg>
<svg style="left:2733px;top:468px;" width="8" height="8" viewBox="0 0 8 8"><path d="M8 0v8H0z" fill="#c6c6c6"/></svg>
<svg style="left:2639.0px;top:491.0px;" width="30" height="30" viewBox="0 0 30 30"><path d="M1 1h28v8h-3.500V5H17.500v20H22v4H8v-4h4.500V5H4.500v4H1z" fill="#c6c6c6"/></svg>
<svg style="left:2673px;top:516px;" width="8" height="8" viewBox="0 0 8 8"><path d="M8 0v8H0z" fill="#c6c6c6"/></svg>
<svg style="left:2697.0px;top:489.0px;" width="34" height="34" viewBox="0 0 34 34"><path d="M8 8.500A13 13 0 0 1 30 17" fill="none" stroke="#c6c6c6" stroke-width="3.600"/><path d="M0 2l3.500 13L14 7z" fill="#c6c6c6"/><g fill="#c6c6c6"><circle cx="29" cy="23" r="1.600"/><circle cx="25.500" cy="28" r="1.600"/><circle cx="20" cy="31" r="1.600"/><circle cx="14" cy="31.500" r="1.600"/><circle cx="8.500" cy="29" r="1.600"/><circle cx="4.500" cy="24.500" r="1.600"/><circle cx="3" cy="19" r="1.600"/></g></svg>
<svg style="left:2733px;top:516px;" width="8" height="8" viewBox="0 0 8 8"><path d="M8 0v8H0z" fill="#c6c6c6"/></svg>
<svg style="left:2636.0px;top:536.0px;" width="36" height="34" viewBox="0 0 36 34"><path d="M22 1l13 13-13 13-13-13z" fill="#c6c6c6"/><path d="M8 15l12 12-6 6-12-12z" fill="none" stroke="#c6c6c6" stroke-width="2.400"/></svg>
<svg style="left:2673px;top:564px;" width="8" height="8" viewBox="0 0 8 8"><path d="M8 0v8H0z" fill="#c6c6c6"/></svg>
<svg style="left:2696.0px;top:536.0px;" width="40" height="34" viewBox="0 0 40 34"><ellipse cx="11" cy="14" rx="9.500" ry="8.500" fill="none" stroke="#c6c6c6" stroke-width="2.200"/><circle cx="20" cy="13" r="11.500" fill="none" stroke="#c6c6c6" stroke-width="2.200"/><path d="M6 13.500h18" stroke="#fff" stroke-width="2.200" stroke-dasharray="2 2"/><path d="M24 11v22l6-6h9z" fill="#c6c6c6" stroke="#535353" stroke-width="1"/></svg>
<svg style="left:2637.0px;top:587.0px;" width="34" height="30" viewBox="0 0 34 30"><defs><linearGradient id="tg"><stop offset="0" stop-color="#2a2a2a"/><stop offset="1" stop-color="#d8d8d8"/></linearGradient></defs><rect x="1.500" y="1.500" width="31" height="26" fill="url(#tg)" stroke="#c6c6c6" stroke-width="2.400"/></svg>
<svg style="left:2673px;top:612px;" width="8" height="8" viewBox="0 0 8 8"><path d="M8 0v8H0z" fill="#c6c6c6"/></svg>
<svg style="left:2697.5px;top:585.5px;" width="33" height="33" viewBox="0 0 33 33"><path d="M24 1.500a4.500 4.500 0 0 1 6.500 6.500l-4 4 1.500 1.500-3 3-1.500-1.500L10 28.500c-2 2-4 1-5 2l-2 1.500-1.500-1.500L3 28.500c1-1 0-3 2-5L18.500 10 17 8.500l3-3L21.500 7z" fill="none" stroke="#c6c6c6" stroke-width="2"/><path d="M24 1.500a4.500 4.500 0 0 1 6.500 6.500l-4 4 1.500 1.500-3 3L17 8.500l3-3L21.500 7z" fill="#c6c6c6"/></svg>
<svg style="left:2634.0px;top:634.0px;" width="40" height="32" viewBox="0 0 40 32"><path d="M9 2c5 3 9 9 8 14 4 1 8-6 14-6 5 0 8 4 8 9h-3c0-3-2-5-5-5-5 0-8 10-17 10-4 0-7-2-9-4 5 0 8-2 8-6s-3-7-7-8c1-2 2-3 3-4z" fill="#c6c6c6"/><g fill="#535353" stroke="#c6c6c6" stroke-width="2"><circle cx="26" cy="4" r="3"/><circle cx="14" cy="18" r="3.500"/><circle cx="4" cy="28" r="3"/></g><path d="M24 6L6 26" stroke="#c6c6c6" stroke-width="1.800"/></svg>
<svg style="left:2696.0px;top:635.0px;" width="38" height="30" viewBox="0 0 38 30"><rect x="0" y="0" width="17" height="17" fill="#c6c6c6"/><ellipse cx="19" cy="15" rx="8" ry="8" fill="#8a8a8a" stroke="#c6c6c6" stroke-width="2"/><circle cx="29" cy="21" r="7.500" fill="#535353" stroke="#c6c6c6" stroke-width="2.400"/></svg>
<svg style="left:2632.0px;top:680.0px;" width="36" height="34" viewBox="0 0 36 34"><path d="M11.500 0v10M0 10.500h10" stroke="#c6c6c6" stroke-width="2" fill="none"/><path d="M12 12h14l8 8v13H12z" fill="#777" stroke="#c6c6c6" stroke-width="2.400"/><path d="M26 12v8h8" fill="none" stroke="#c6c6c6" stroke-width="2"/></svg>
<svg style="left:2697.0px;top:683.0px;" width="34" height="28" viewBox="0 0 34 28"><g fill="none" stroke="#c6c6c6" stroke-width="2.200"><rect x="1.200" y="1.200" width="31.500" height="25.500"/><path d="M11.500 1v26M22 1v26M1 9.500h32M1 18.500h32"/></g></svg>
<svg style="left:2637.0px;top:728.0px;" width="34" height="34" viewBox="0 0 34 34"><circle cx="13" cy="13" r="11" fill="none" stroke="#c6c6c6" stroke-width="2.800"/><path d="M21 21l11 11" stroke="#c6c6c6" stroke-width="4.400" stroke-linecap="round"/></svg>
<svg style="left:2673px;top:757px;" width="8" height="8" viewBox="0 0 8 8"><path d="M8 0v8H0z" fill="#c6c6c6"/></svg>
<svg style="left:2696.0px;top:729.0px;" width="32" height="32" viewBox="0 0 32 32"><path d="M20 0l12 12-4 1-5 5 1 7-4 3-6-6-11 10 9-12-6-6 3-4 7 1 5-5z" fill="#c6c6c6"/></svg>
<svg style="left:2633.0px;top:776.0px;" width="38" height="34" viewBox="0 0 38 34"><path d="M0 1v22l15-9z" fill="#c6c6c6"/><path d="M26 13l10 4v11l-10 5-10-5V17z" fill="#c6c6c6"/><path d="M16 17l10 4.500L36 17M26 21.500V33" stroke="#535353" stroke-width="1.600" fill="none"/></svg>
<svg style="left:2696.0px;top:776.0px;" width="38" height="34" viewBox="0 0 38 34"><g fill="none" stroke="#c6c6c6" stroke-width="2"><path d="M1 1l21 7v17L1 33zM8 3.500v27M15 5.500v22M1 12l21 3.500M1 22.500l21-2.500"/></g><g fill="#9a9a9a"><rect x="24" y="16" width="6" height="2"/><rect x="20" y="21.500" width="13" height="2"/><rect x="14" y="27" width="22" height="2"/><rect x="6" y="32" width="32" height="2"/></g></svg>
<div style="left:2624px;top:823px;width:120px;height:2px;background:#4a4a4a;"></div>
<div style="left:2660px;top:869px;width:72px;height:72px;background:#000;border:2px solid #fff;box-shadow:0 0 0 1px #333"></div>
<div style="left:2677px;top:886px;width:38px;height:38px;background:#535353;border:2px solid #fff"></div>
<div style="left:2624px;top:833px;width:73px;height:71px;background:#fff;border:2px solid #3a3a3a"></div>
<svg style="left:2713px;top:832px;" width="25" height="25" viewBox="0 0 25 25"><path d="M7 7.500c8-3 12 2 11 9" fill="none" stroke="#c6c6c6" stroke-width="4"/><path d="M0 8.500L9 0v13zM12 15h13l-6.500 9z" fill="#c6c6c6"/></svg>
<svg style="left:2624px;top:914px;" width="25" height="24" viewBox="0 0 25 24"><rect x="8" y="8" width="15" height="14" fill="#000" stroke="#ddd" stroke-width="2"/><rect x="11.500" y="11.500" width="7" height="6" fill="#535353" stroke="#ddd" stroke-width="1.600"/><rect x="1.500" y="1.500" width="13" height="12" fill="#fff" stroke="#000" stroke-width="2"/></svg>
<div style="left:2624px;top:952px;width:118px;height:41px;border:2px solid #5e5e5e;border-radius:5px"></div>
<div style="left:2626px;top:954px;width:35px;height:37px;background:#2f2f2f;border-radius:3px 0 0 3px"></div>
<div style="left:2661px;top:954px;width:2px;height:37px;background:#5e5e5e;"></div>
<div style="left:2701px;top:954px;width:2px;height:37px;background:#5e5e5e;"></div>
<div style="left:2631px;top:960px;width:25px;height:25px;background:#fff;border:2px solid #000"></div>
<div style="left:2670px;top:960px;width:25px;height:25px;background:linear-gradient(90deg,#fff,#222);border:2px solid #000"></div>
<svg style="left:2710px;top:960px;" width="25" height="25" viewBox="0 0 25 25"><rect x="1" y="1" width="23" height="23" fill="#fff" stroke="#000" stroke-width="2"/><path d="M2 23L23 2" stroke="#e8382e" stroke-width="4"/></svg>
<div style="left:2624px;top:1002px;width:118px;height:38px;border:2px solid #5e5e5e;border-radius:5px"></div>
<div style="left:2626px;top:1004px;width:35px;height:34px;background:#2f2f2f;border-radius:3px 0 0 3px"></div>
<div style="left:2661px;top:1004px;width:2px;height:34px;background:#5e5e5e;"></div>
<div style="left:2701px;top:1004px;width:2px;height:34px;background:#5e5e5e;"></div>
<svg style="left:2633px;top:1011px;" width="22" height="22" viewBox="0 0 22 22"><circle cx="9" cy="9" r="7" fill="#777" stroke="#c6c6c6" stroke-width="2"/><rect x="9" y="9" width="12" height="12" fill="#c6c6c6"/></svg>
<svg style="left:2673px;top:1011px;" width="22" height="22" viewBox="0 0 22 22"><rect x="9" y="9" width="12" height="12" fill="#c6c6c6"/><circle cx="9" cy="9" r="7" fill="#777" stroke="#c6c6c6" stroke-width="2"/><rect x="10" y="10" width="11" height="11" fill="#c6c6c6" opacity=".8"/></svg>
<svg style="left:2713px;top:1011px;" width="22" height="22" viewBox="0 0 22 22"><circle cx="10" cy="10" r="7" fill="#686868" stroke="#787878" stroke-width="2"/><path d="M10 10h7v7h-7z" fill="#787878"/></svg>
<svg style="left:2662px;top:1055px;" width="46" height="34" viewBox="0 0 46 34"><rect x="1.200" y="13" width="26" height="19" fill="#777" stroke="#c6c6c6" stroke-width="2.400"/><rect x="17" y="1.200" width="27" height="21" fill="#777" stroke="#c6c6c6" stroke-width="2.400"/><rect x="17" y="1" width="27" height="5" fill="#c6c6c6"/></svg>
<svg style="left:2669px;top:1131px;" width="30" height="9" viewBox="0 0 30 9"><g fill="#c6c6c6"><circle cx="4" cy="4.500" r="3.600"/><circle cx="15" cy="4.500" r="3.600"/><circle cx="26" cy="4.500" r="3.600"/></g></svg>
<div style="left:2792px;top:271px;width:521px;height:397px;background:#535353;border:2px solid #383838;border-radius:8px 8px 0 0;box-shadow:0 2px 14px rgba(0,0,0,.4)"></div>
<div style="left:2794px;top:273px;width:517px;height:28px;background:#424242;border-bottom:2px solid #383838;border-radius:6px 6px 0 0"></div><svg style="left:2804px;top:281px;" width="13" height="13" viewBox="0 0 13 13"><path d="M1 1l11 11M12 1L1 12" stroke="#d0d0d0" stroke-width="2.600"/></svg><svg style="left:3281px;top:281px;" width="15" height="12" viewBox="0 0 15 12"><path d="M6 1L1.500 6 6 11M13 1L8.500 6 13 11" fill="none" stroke="#d0d0d0" stroke-width="1.800"/></svg>
<div style="left:2794px;top:300px;width:517px;height:54px;background:#424242;border-bottom:2px solid #383838"></div>
<div style="left:2794px;top:300px;width:200px;height:54px;background:#535353;border-right:2px solid #3a3a3a"></div>
<svg style="left:2803px;top:319px;" width="12" height="20" viewBox="0 0 12 20"><path d="M1.500 7.500L6 2.500l4.500 5M1.500 12.500L6 17.500l4.500-5" fill="none" stroke="#c6c6c6" stroke-width="1.600"/></svg>
<span class="t" style="top:312.0px;font-size:21.5px;line-height:32px;color:#e4e4e4;left:2825px;">グラデーション</span>
<svg style="left:3278px;top:320px;" width="20" height="16" viewBox="0 0 20 16"><g fill="#c6c6c6"><rect y="0" width="20" height="2.400"/><rect y="6.500" width="20" height="2.400"/><rect y="13" width="20" height="2.400"/></g></svg>
<div style="left:2804px;top:366px;width:64px;height:64px;background:linear-gradient(90deg,#fff,#000);border:2px solid #3a3a3a"></div>
<div style="left:2825px;top:461px;width:39px;height:39px;background:#000;border:2px solid #fff"></div>
<div style="left:2834px;top:470px;width:21px;height:21px;background:#535353;border:2px solid #fff"></div>
<div style="left:2804px;top:440px;width:40px;height:40px;background:#fff;border:2px solid #3a3a3a"></div>
<span class="t" style="top:373.0px;font-size:23.5px;line-height:35px;color:#d6d6d6;left:2968px;">種類 :</span>
<div style="left:3036px;top:366px;width:148px;height:47px;border:2px solid #5e5e5e;border-radius:5px"></div>
<div style="left:3085px;top:368px;width:2px;height:43px;background:#5e5e5e;"></div>
<div style="left:3135px;top:368px;width:2px;height:43px;background:#5e5e5e;"></div>
<div style="left:3044px;top:374px;width:33px;height:32px;background:linear-gradient(90deg,#333,#ddd);border:2px solid #d0d0d0"></div>
<div style="left:3094px;top:374px;width:33px;height:32px;background:radial-gradient(circle,#e8e8e8 0,#444 75%);border:2px solid #d0d0d0"></div>
<svg style="left:3144px;top:374px;" width="33" height="32" viewBox="0 0 33 32"><defs><filter id="fg"><feGaussianBlur stdDeviation="2.200"/></filter></defs><rect width="33" height="32" fill="#3c3c3c"/><path d="M3 22c5-6 9 1 14-5s7-6 13-5" fill="none" stroke="#f0f0f0" stroke-width="7" stroke-linecap="round" filter="url(#fg)"/><rect x="1" y="1" width="31" height="30" fill="none" stroke="#d0d0d0" stroke-width="2"/></svg>
<span class="t" style="top:424.0px;font-size:23.5px;line-height:35px;color:#7f7f7f;left:2968px;">描画 :</span>
<div style="left:3039px;top:428px;width:25px;height:25px;background:#8a8a8a;border-radius:50%;border:2px solid #7a7a7a"></div>
<div style="left:3047px;top:436px;width:9px;height:9px;background:#535353;border-radius:50%"></div>
<span class="t" style="top:424.0px;font-size:23.5px;line-height:35px;color:#7f7f7f;left:3073px;">ポイント</span>
<div style="left:3188px;top:428px;width:25px;height:25px;border-radius:50%;border:2px solid #7a7a7a"></div>
<span class="t" style="top:424.0px;font-size:23.5px;line-height:35px;color:#7f7f7f;left:3223px;">ライン</span>
<span class="t" style="top:472.0px;font-size:23.5px;line-height:35px;color:#7f7f7f;left:2924px;">停止:</span>
<div style="left:2986px;top:472px;width:31px;height:31px;background:#b8b8b8;border-radius:50%;border:3px solid #6d86c8;box-shadow:inset 0 0 0 2px #535353"></div>
<svg style="left:3040px;top:474px;" width="22" height="26" viewBox="0 0 22 26"><g fill="none" stroke="#7a7a7a" stroke-width="2"><path d="M1 5.500h20M7.500 5V2h7v3M3.500 6v18h15V6"/><path d="M8 9.500v11M11 9.500v11M14 9.500v11" stroke-width="1.600"/></g></svg>
<span class="t" style="top:540.0px;font-size:23.5px;line-height:35px;color:#7f7f7f;left:2920px;">不透明度 :</span>
<div style="left:3036px;top:534px;width:168px;height:42px;background:#585858;border-radius:5px"></div>
<svg style="left:3174px;top:549px;" width="18" height="12" viewBox="0 0 18 12"><path d="M2 2l7 7 7-7" fill="none" stroke="#707070" stroke-width="2.200"/></svg>
<span class="t" style="top:592.0px;font-size:23.5px;line-height:35px;color:#7f7f7f;left:2897px;">スプレッド :</span>
<div style="left:3036px;top:586px;width:168px;height:42px;background:#585858;border-radius:5px"></div>
<svg style="left:3174px;top:601px;" width="18" height="12" viewBox="0 0 18 12"><path d="M2 2l7 7 7-7" fill="none" stroke="#707070" stroke-width="2.200"/></svg>
<svg style="left:2828px;top:562px;" width="36" height="36" viewBox="0 0 36 36"><path d="M26 2a4.500 4.500 0 0 1 6.500 6.500l-4 4 1.500 1.500-3 3-1.500-1.500L12 29c-2 2-4 1-5 2l-2 1.500-1.500-1.500L5 29c1-1 0-3 2-5L20.500 10.500 19 9l3-3 1.500 1.500z" fill="#6a6a6a"/></svg>
<div style="left:2794px;top:651px;width:517px;height:4px;background:#3a3a3a;"></div>
<svg style="left:3031px;top:657px;" width="40" height="8" viewBox="0 0 40 8"><rect x="0" y="0" width="2" height="8" fill="#3a3a3a"/><rect x="4" y="0" width="2" height="8" fill="#3a3a3a"/><rect x="8" y="0" width="2" height="8" fill="#3a3a3a"/><rect x="12" y="0" width="2" height="8" fill="#3a3a3a"/><rect x="16" y="0" width="2" height="8" fill="#3a3a3a"/><rect x="20" y="0" width="2" height="8" fill="#3a3a3a"/><rect x="24" y="0" width="2" height="8" fill="#3a3a3a"/><rect x="28" y="0" width="2" height="8" fill="#3a3a3a"/><rect x="32" y="0" width="2" height="8" fill="#3a3a3a"/><rect x="36" y="0" width="2" height="8" fill="#3a3a3a"/></svg>
<div style="left:2793px;top:849px;width:505px;height:771px;background:#535353;border:2px solid #383838;border-radius:8px 0 0 0;box-shadow:0 2px 14px rgba(0,0,0,.4)"></div>
<div style="left:2793px;top:849px;width:567px;height:29px;background:#424242;border:2px solid #383838;border-right:0;border-radius:8px 0 0 0"></div>
<svg style="left:2805px;top:858px;" width="13" height="13" viewBox="0 0 13 13"><path d="M1 1l11 11M12 1L1 12" stroke="#d0d0d0" stroke-width="2.600"/></svg>
<svg style="left:3273px;top:859px;" width="15" height="12" viewBox="0 0 15 12"><path d="M6 1L1.500 6 6 11M13 1L8.500 6 13 11" fill="none" stroke="#d0d0d0" stroke-width="1.800"/></svg>
<svg style="left:3349px;top:859px;" width="15" height="12" viewBox="0 0 15 12"><path d="M2 1l4.500 5L2 11M9 1l4.500 5L9 11" fill="none" stroke="#d0d0d0" stroke-width="1.800"/></svg>
<div style="left:2795px;top:877px;width:501px;height:55px;background:#424242;border-bottom:2px solid #383838"></div>
<div style="left:2940px;top:877px;width:2px;height:53px;background:#363636;"></div>
<div style="left:3163px;top:877px;width:2px;height:53px;background:#363636;"></div>
<div style="left:2942px;top:877px;width:101px;height:55px;background:#535353;border-right:2px solid #3a3a3a"></div>
<span class="t" style="top:889.0px;font-size:21.5px;line-height:32px;color:#b6b6b6;left:2814px;">スウォッチ</span>
<span class="t" style="top:889.0px;font-size:21.5px;line-height:32px;color:#e6e6e6;left:2961px;">ブラシ</span>
<span class="t" style="top:889.0px;font-size:21.5px;line-height:32px;color:#b6b6b6;left:3061px;">シンボル</span>
<svg style="left:3264px;top:897px;" width="20" height="16" viewBox="0 0 20 16"><g fill="#c6c6c6"><rect y="0" width="20" height="2.400"/><rect y="6.500" width="20" height="2.400"/><rect y="13" width="20" height="2.400"/></g></svg>
<div style="left:3300px;top:876px;width:62px;height:84px;background:#535353;border:2px solid #383838;box-shadow:0 2px 8px rgba(0,0,0,.3)"></div>
<svg style="left:3319px;top:884px;" width="40" height="8" viewBox="0 0 40 8"><rect x="0" y="0" width="2" height="8" fill="#3a3a3a"/><rect x="4" y="0" width="2" height="8" fill="#3a3a3a"/><rect x="8" y="0" width="2" height="8" fill="#3a3a3a"/><rect x="12" y="0" width="2" height="8" fill="#3a3a3a"/><rect x="16" y="0" width="2" height="8" fill="#3a3a3a"/><rect x="20" y="0" width="2" height="8" fill="#3a3a3a"/><rect x="24" y="0" width="2" height="8" fill="#3a3a3a"/><rect x="28" y="0" width="2" height="8" fill="#3a3a3a"/><rect x="32" y="0" width="2" height="8" fill="#3a3a3a"/><rect x="36" y="0" width="2" height="8" fill="#3a3a3a"/></svg>
<svg style="left:3324px;top:905px;" width="40" height="40" viewBox="0 0 40 40"><path d="M15 6H3v29h29V22" fill="none" stroke="#c6c6c6" stroke-width="4"/><path d="M19 20L37 2M23 2h15v15" fill="none" stroke="#c6c6c6" stroke-width="4"/></svg>
<div style="left:2806px;top:944px;width:480px;height:620px;border:2px solid #5e5e5e"></div>
<svg style="left:3262px;top:953px;" width="16" height="10" viewBox="0 0 16 10"><path d="M2 8l6-6 6 6" fill="none" stroke="#646464" stroke-width="2"/></svg>
<svg style="left:3262px;top:1545px;" width="16" height="10" viewBox="0 0 16 10"><path d="M2 2l6 6 6-6" fill="none" stroke="#646464" stroke-width="2"/></svg>
<svg style="left:2808.0px;top:946px;" width="64" height="64" viewBox="0 0 64 64"><rect width="64" height="64" fill="#e4e4e4"/><g fill="#000"><circle cx="32" cy="32" r="5.200"/></g></svg>
<svg style="left:2874.1px;top:946px;" width="64" height="64" viewBox="0 0 64 64"><rect width="64" height="64" fill="#e4e4e4"/><g fill="#000"><circle cx="32" cy="32" r="15"/></g></svg>
<svg style="left:2940.2px;top:946px;" width="64" height="64" viewBox="0 0 64 64"><rect width="64" height="64" fill="#e4e4e4"/><g fill="#000"><ellipse cx="32" cy="32" rx="3.200" ry="1.600" transform="rotate(-20 32 32)"/></g></svg>
<svg style="left:3006.3px;top:946px;" width="64" height="64" viewBox="0 0 64 64"><rect width="64" height="64" fill="#e4e4e4"/><g fill="#000"><ellipse cx="32" cy="32" rx="5.500" ry="2.600" transform="rotate(15 32 32)"/></g></svg>
<svg style="left:3072.4px;top:946px;" width="64" height="64" viewBox="0 0 64 64"><rect width="64" height="64" fill="#e4e4e4"/><g fill="#000"><rect x="31.600" y="27" width=".8" height="10" fill="#999"/></g></svg>
<svg style="left:3138.5px;top:946px;" width="64" height="64" viewBox="0 0 64 64"><rect width="64" height="64" fill="#e4e4e4"/><g fill="#000"><circle cx="32" cy="32" r="12"/></g></svg>
<div style="left:2808px;top:1012px;width:448px;height:64px;background:#e4e4e4;"></div>
<div style="left:2808px;top:1078px;width:448px;height:64px;background:#e4e4e4;"></div>
<div style="left:2808px;top:1144px;width:448px;height:64px;background:#e4e4e4;"></div>
<div style="left:2808px;top:1210px;width:448px;height:64px;background:#e4e4e4;"></div>
<div style="left:2808px;top:1276px;width:448px;height:64px;background:#e4e4e4;"></div>
<div style="left:2818px;top:1042px;width:370px;height:4px;background:#000;"></div>
<span class="t" style="top:1028.0px;font-size:23.5px;line-height:35px;color:#000;left:3198px;">基本</span>
<svg style="left:2808px;top:1078px;" width="448" height="64" viewBox="0 0 448 64"><defs><filter id="rg" x="0" y="-50%" width="100%" height="200%"><feTurbulence type="fractalNoise" baseFrequency=".09 .6" numOctaves="2" seed="3"/><feDisplacementMap in="SourceGraphic" scale="6"/></filter></defs><g filter="url(#rg)"><path d="M6 27c40-1 80-1 130 0s110-3 180-2c30 0 50-3 76-4l-30 7c-40 3-80 7-140 8s-150 3-216-2z" fill="#000"/></g><g fill="#000"><rect x="388" y="25" width="8" height="2.500"/><rect x="400" y="27" width="5" height="2"/><rect x="410" y="25" width="5" height="1.500"/><rect x="420" y="26" width="3" height="1.500"/><rect x="428" y="27" width="3" height="1.500"/><rect x="442" y="24" width="1.500" height="1.500"/></g></svg>
<svg style="left:2808px;top:1144px;" width="448" height="64" viewBox="0 0 448 64"><g fill="none" stroke="#d2691e" stroke-width="1.600"><path d="M92 20h264" stroke-width="1" stroke="#e08a50"/><path d="M8 25h432" stroke="#a8803c" stroke-width="2.200"/><path d="M46 17c14 3 20 10 18 17-3 10-30 18-38 14-6-4 8-14 36-17 30-2 80-2 160-2s130 0 160 2c28 3 42 13 36 17-8 4-35-4-38-14-2-7 4-14 18-17"/></g><path d="M42 14l18 2-10 7z M406 14l-18 2 10 7z" fill="#d2691e"/><path d="M4 25l7-2.500v5z M444 25l-7-2.500v5z" fill="#a8803c"/></svg>
<svg style="left:2808px;top:1210px;" width="448" height="64" viewBox="0 0 448 64"><defs><pattern id="dnm" width="4" height="4" patternUnits="userSpaceOnUse"><rect width="4" height="4" fill="#2d4668"/><rect width="1" height="1" fill="#5a7496"/><rect x="2" y="2" width="1" height="1" fill="#48628a"/></pattern></defs><path d="M15 16h196v-16h32v48H48v16H15z" fill="url(#dnm)"/><path d="M24 64V24h196V4M36 64V34h196V4" fill="none" stroke="#d8c890" stroke-width="1.200" stroke-dasharray="3 2"/><path d="M64 16v32M129 16v32M194 16v32" stroke="#e4e4e4" stroke-width="1.600"/><rect x="64" y="0" width="1.600" height="5" fill="#111"/><rect x="64" y="58" width="1.600" height="6" fill="#111"/><rect x="129" y="0" width="1.600" height="5" fill="#111"/><rect x="129" y="58" width="1.600" height="6" fill="#111"/><rect x="194" y="0" width="1.600" height="5" fill="#111"/><rect x="194" y="58" width="1.600" height="6" fill="#111"/><rect x="258" y="0" width="1.600" height="5" fill="#111"/><rect x="258" y="58" width="1.600" height="6" fill="#111"/><rect x="323" y="0" width="1.600" height="5" fill="#111"/><rect x="323" y="58" width="1.600" height="6" fill="#111"/></svg>
<svg style="left:2808px;top:1276px;" width="448" height="64" viewBox="0 0 448 64"><defs><filter id="sb"><feGaussianBlur stdDeviation="1.800"/></filter></defs><path d="M16 24h8l14-8v32l-14-8h-8z" fill="#c4c4c4" stroke="#111" stroke-width="1.800"/><rect x="16" y="25" width="8" height="14" fill="#777" stroke="#111" stroke-width="1"/><path d="M188 30c30-14 60-12 92 2s70 14 100 0" fill="none" stroke="#4a4a4a" stroke-width="10" stroke-linecap="round" filter="url(#sb)"/></svg>
<span class="t" style="top:1289.5px;font-size:25px;line-height:37px;color:#000;left:2872px;">6.00</span>
<svg style="left:2817px;top:1572px;" width="32" height="24" viewBox="0 0 32 24"><g fill="#c6c6c6"><rect x="0" y="1" width="4.500" height="18"/><rect x="6.500" y="1" width="5" height="18"/><rect x="7.800" y="3" width="2.400" height="5" fill="#535353"/><path d="M13 2l4-1.500 6 17.500-4 1.500z"/><path d="M25 18h7l-3.500 4z"/></g></svg>
<svg style="left:2868px;top:1569px;" width="36" height="28" viewBox="0 0 36 28"><path d="M1 2h10l3 4h12v14H1z" fill="#c6c6c6"/><ellipse cx="22" cy="19" rx="12" ry="8.500" fill="#535353"/><g fill="none" stroke="#c6c6c6" stroke-width="2.200"><ellipse cx="17" cy="20" rx="6" ry="5"/><ellipse cx="26" cy="19" rx="7" ry="6.500"/></g></svg>
<svg style="left:3061px;top:1571px;" width="24" height="24" viewBox="0 0 24 24"><path d="M2 2l20 20M20 1L6 17c-3 0-4 3-5 6 4 0 7-1 7-4z" stroke="#707070" stroke-width="2" fill="#707070"/></svg>
<svg style="left:3114px;top:1572px;" width="23" height="22" viewBox="0 0 23 22"><rect x="1" y="1" width="21" height="20" fill="none" stroke="#707070" stroke-width="2"/><rect x="1" y="1" width="21" height="4" fill="#707070"/><g fill="#707070"><rect x="4" y="8" width="2.500" height="2"/><rect x="8" y="8" width="10" height="2"/><rect x="4" y="12" width="2.500" height="2"/><rect x="8" y="12" width="10" height="2"/><rect x="4" y="16" width="2.500" height="2"/><rect x="8" y="16" width="10" height="2"/></g></svg>
<svg style="left:3167px;top:1572px;" width="22" height="22" viewBox="0 0 22 22"><path d="M0 0h22v22H10V10H0z" fill="#dcdcdc"/><path d="M1 12.500h7v8z" fill="#dcdcdc"/></svg>
<svg style="left:3218px;top:1570px;" width="22" height="26" viewBox="0 0 22 26"><g fill="none" stroke="#707070" stroke-width="2"><path d="M1 5.500h20M7.500 5V2h7v3M3.500 6v18h15V6"/><path d="M8 9.500v11M11 9.500v11M14 9.500v11" stroke-width="1.600"/></g></svg>
<div style="left:2795px;top:1603px;width:501px;height:4px;background:#3a3a3a;"></div>
<svg style="left:3026px;top:1609px;" width="40" height="8" viewBox="0 0 40 8"><rect x="0" y="0" width="2" height="8" fill="#3a3a3a"/><rect x="4" y="0" width="2" height="8" fill="#3a3a3a"/><rect x="8" y="0" width="2" height="8" fill="#3a3a3a"/><rect x="12" y="0" width="2" height="8" fill="#3a3a3a"/><rect x="16" y="0" width="2" height="8" fill="#3a3a3a"/><rect x="20" y="0" width="2" height="8" fill="#3a3a3a"/><rect x="24" y="0" width="2" height="8" fill="#3a3a3a"/><rect x="28" y="0" width="2" height="8" fill="#3a3a3a"/><rect x="32" y="0" width="2" height="8" fill="#3a3a3a"/><rect x="36" y="0" width="2" height="8" fill="#3a3a3a"/></svg>
<div style="left:182px;top:1940px;width:2997px;height:170px;background:linear-gradient(90deg,#858585 0px,#868686 438px,#85858c 518px,#8b8591 578px,#a08e8c 618px,#c4aa88 668px,#d0b690 748px,#ccb694 838px,#aca698 898px,#a09c98 968px,#a89c94 1048px,#a89a94 1118px,#8e9098 1158px,#7e8a94 1258px,#8a9098 1338px,#989898 1398px,#b0a498 1498px,#b8a89c 1688px,#b6a6ae 1818px,#b8a8b6 1898px,#c6b6bc 1978px,#d8c8c4 2068px,#e8d0b8 2168px,#ecd4b0 2258px,#dccca8 2338px,#b8bca8 2398px,#a8b0ae 2478px,#b0b0c4 2578px,#b2b4cc 2658px,#a8bcd2 2718px,#a0c4d8 2798px,#a8cce0 2918px,#a8c6de 2997px);border-radius:11px 11px 0 0;overflow:hidden;box-shadow:0 0 0 1px rgba(255,255,255,.18) inset"><div style="left:0;top:0;width:100%;height:100%;background:radial-gradient(ellipse 300px 110px at 760px 175px,rgba(232,204,156,.75),rgba(232,204,156,0) 100%),radial-gradient(ellipse 180px 100px at 1120px 175px,rgba(214,170,140,.7),rgba(214,170,140,0) 100%),radial-gradient(ellipse 260px 90px at 2250px 172px,rgba(246,222,184,.6),rgba(246,222,184,0) 100%),radial-gradient(ellipse 300px 90px at 2760px 172px,rgba(168,212,228,.55),rgba(168,212,228,0) 100%),radial-gradient(ellipse 200px 80px at 600px 0px,rgba(112,118,130,.6),rgba(112,118,130,0) 100%)"></div></div>
<svg style="left:194px;top:1951.5px" width="128" height="128" viewBox="0 0 128 128"><defs><linearGradient id="fa" x1="0" y1="0" x2="0" y2="1"><stop offset="0" stop-color="#5ac8f8"/><stop offset="1" stop-color="#3a7ee8"/></linearGradient><linearGradient id="fb" x1="0" y1="0" x2="0" y2="1"><stop offset="0" stop-color="#f6f7f9"/><stop offset="1" stop-color="#dfe8f3"/></linearGradient><clipPath id="fc"><rect x="12" y="15" width="104" height="98" rx="8"/></clipPath></defs>
<g clip-path="url(#fc)"><rect x="12" y="15" width="104" height="98" fill="url(#fa)"/><path d="M66 15h50v98H74c-3-14-3-28-3-40H54c1-22 5-42 12-58z" fill="url(#fb)"/><path d="M66 15c-7 16-11 36-12 58h17c0 12 0 26 3 40" fill="none" stroke="#1a2a44" stroke-width="2.400"/></g>
<rect x="38.500" y="40" width="5" height="11" rx="2.500" fill="#1a2a44"/><rect x="85.500" y="40" width="5" height="11" rx="2.500" fill="#1a2a44"/><path d="M33 78c12 16 48 18 63 0" fill="none" stroke="#1a2a44" stroke-width="3.600" stroke-linecap="round"/></svg>
<svg style="left:330.5px;top:1951.5px" width="128" height="128" viewBox="0 0 128 128"><defs><linearGradient id="sa" x1="0" y1="0" x2="0" y2="1"><stop offset="0" stop-color="#f8f8f8"/><stop offset="1" stop-color="#d4d4d6"/></linearGradient><radialGradient id="sb2" cx=".5" cy=".4" r=".6"><stop offset="0" stop-color="#34b8e8"/><stop offset="1" stop-color="#2a6fe0"/></radialGradient></defs>
<circle cx="64" cy="64" r="56.500" fill="url(#sa)"/><circle cx="64" cy="64" r="51.500" fill="url(#sb2)"/><g stroke="#fff" stroke-width="1.300"><line x1="64" y1="14" x2="64" y2="23" transform="rotate(0 64 64)"/><line x1="64" y1="15" x2="64" y2="19" transform="rotate(5 64 64)"/><line x1="64" y1="14" x2="64" y2="23" transform="rotate(10 64 64)"/><line x1="64" y1="15" x2="64" y2="19" transform="rotate(15 64 64)"/><line x1="64" y1="14" x2="64" y2="23" transform="rotate(20 64 64)"/><line x1="64" y1="15" x2="64" y2="19" transform="rotate(25 64 64)"/><line x1="64" y1="14" x2="64" y2="23" transform="rotate(30 64 64)"/><line x1="64" y1="15" x2="64" y2="19" transform="rotate(35 64 64)"/><line x1="64" y1="14" x2="64" y2="23" transform="rotate(40 64 64)"/><line x1="64" y1="15" x2="64" y2="19" transform="rotate(45 64 64)"/><line x1="64" y1="14" x2="64" y2="23" transform="rotate(50 64 64)"/><line x1="64" y1="15" x2="64" y2="19" transform="rotate(55 64 64)"/><line x1="64" y1="14" x2="64" y2="23" transform="rotate(60 64 64)"/><line x1="64" y1="15" x2="64" y2="19" transform="rotate(65 64 64)"/><line x1="64" y1="14" x2="64" y2="23" transform="rotate(70 64 64)"/><line x1="64" y1="15" x2="64" y2="19" transform="rotate(75 64 64)"/><line x1="64" y1="14" x2="64" y2="23" transform="rotate(80 64 64)"/><line x1="64" y1="15" x2="64" y2="19" transform="rotate(85 64 64)"/><line x1="64" y1="14" x2="64" y2="23" transform="rotate(90 64 64)"/><line x1="64" y1="15" x2="64" y2="19" transform="rotate(95 64 64)"/><line x1="64" y1="14" x2="64" y2="23" transform="rotate(100 64 64)"/><line x1="64" y1="15" x2="64" y2="19" transform="rotate(105 64 64)"/><line x1="64" y1="14" x2="64" y2="23" transform="rotate(110 64 64)"/><line x1="64" y1="15" x2="64" y2="19" transform="rotate(115 64 64)"/><line x1="64" y1="14" x2="64" y2="23" transform="rotate(120 64 64)"/><line x1="64" y1="15" x2="64" y2="19" transform="rotate(125 64 64)"/><line x1="64" y1="14" x2="64" y2="23" transform="rotate(130 64 64)"/><line x1="64" y1="15" x2="64" y2="19" transform="rotate(135 64 64)"/><line x1="64" y1="14" x2="64" y2="23" transform="rotate(140 64 64)"/><line x1="64" y1="15" x2="64" y2="19" transform="rotate(145 64 64)"/><line x1="64" y1="14" x2="64" y2="23" transform="rotate(150 64 64)"/><line x1="64" y1="15" x2="64" y2="19" transform="rotate(155 64 64)"/><line x1="64" y1="14" x2="64" y2="23" transform="rotate(160 64 64)"/><line x1="64" y1="15" x2="64" y2="19" transform="rotate(165 64 64)"/><line x1="64" y1="14" x2="64" y2="23" transform="rotate(170 64 64)"/><line x1="64" y1="15" x2="64" y2="19" transform="rotate(175 64 64)"/><line x1="64" y1="14" x2="64" y2="23" transform="rotate(180 64 64)"/><line x1="64" y1="15" x2="64" y2="19" transform="rotate(185 64 64)"/><line x1="64" y1="14" x2="64" y2="23" transform="rotate(190 64 64)"/><line x1="64" y1="15" x2="64" y2="19" transform="rotate(195 64 64)"/><line x1="64" y1="14" x2="64" y2="23" transform="rotate(200 64 64)"/><line x1="64" y1="15" x2="64" y2="19" transform="rotate(205 64 64)"/><line x1="64" y1="14" x2="64" y2="23" transform="rotate(210 64 64)"/><line x1="64" y1="15" x2="64" y2="19" transform="rotate(215 64 64)"/><line x1="64" y1="14" x2="64" y2="23" transform="rotate(220 64 64)"/><line x1="64" y1="15" x2="64" y2="19" transform="rotate(225 64 64)"/><line x1="64" y1="14" x2="64" y2="23" transform="rotate(230 64 64)"/><line x1="64" y1="15" x2="64" y2="19" transform="rotate(235 64 64)"/><line x1="64" y1="14" x2="64" y2="23" transform="rotate(240 64 64)"/><line x1="64" y1="15" x2="64" y2="19" transform="rotate(245 64 64)"/><line x1="64" y1="14" x2="64" y2="23" transform="rotate(250 64 64)"/><line x1="64" y1="15" x2="64" y2="19" transform="rotate(255 64 64)"/><line x1="64" y1="14" x2="64" y2="23" transform="rotate(260 64 64)"/><line x1="64" y1="15" x2="64" y2="19" transform="rotate(265 64 64)"/><line x1="64" y1="14" x2="64" y2="23" transform="rotate(270 64 64)"/><line x1="64" y1="15" x2="64" y2="19" transform="rotate(275 64 64)"/><line x1="64" y1="14" x2="64" y2="23" transform="rotate(280 64 64)"/><line x1="64" y1="15" x2="64" y2="19" transform="rotate(285 64 64)"/><line x1="64" y1="14" x2="64" y2="23" transform="rotate(290 64 64)"/><line x1="64" y1="15" x2="64" y2="19" transform="rotate(295 64 64)"/><line x1="64" y1="14" x2="64" y2="23" transform="rotate(300 64 64)"/><line x1="64" y1="15" x2="64" y2="19" transform="rotate(305 64 64)"/><line x1="64" y1="14" x2="64" y2="23" transform="rotate(310 64 64)"/><line x1="64" y1="15" x2="64" y2="19" transform="rotate(315 64 64)"/><line x1="64" y1="14" x2="64" y2="23" transform="rotate(320 64 64)"/><line x1="64" y1="15" x2="64" y2="19" transform="rotate(325 64 64)"/><line x1="64" y1="14" x2="64" y2="23" transform="rotate(330 64 64)"/><line x1="64" y1="15" x2="64" y2="19" transform="rotate(335 64 64)"/><line x1="64" y1="14" x2="64" y2="23" transform="rotate(340 64 64)"/><line x1="64" y1="15" x2="64" y2="19" transform="rotate(345 64 64)"/><line x1="64" y1="14" x2="64" y2="23" transform="rotate(350 64 64)"/><line x1="64" y1="15" x2="64" y2="19" transform="rotate(355 64 64)"/></g>
<path d="M99 29L58 58l12 12z" fill="#ec3b30"/><path d="M99 29L70 70l-6-6z" fill="#c9342c"/><path d="M29 99l41-29-12-12z" fill="#fff"/><path d="M29 99l29-41 6 6z" fill="#d0d0d0"/></svg>
<svg style="left:466px;top:1951.5px" width="128" height="128" viewBox="0 0 128 128"><defs><radialGradient id="ffa" cx=".7" cy=".15" r="1"><stop offset="0" stop-color="#fff36a"/><stop offset=".3" stop-color="#ffbd2f"/><stop offset=".6" stop-color="#ff6a2f"/><stop offset=".85" stop-color="#f0346a"/><stop offset="1" stop-color="#e0258c"/></radialGradient><radialGradient id="ffb" cx=".5" cy=".3" r=".7"><stop offset="0" stop-color="#a04cf0"/><stop offset="1" stop-color="#5a3cc0"/></radialGradient></defs>
<path d="M82 4c4 10 14 14 22 26 4-2 4-8 3-12 12 14 16 32 13 50-4 26-26 48-56 48S8 94 8 66c0-14 4-28 16-40 0 4 1 8 3 10 4-8 10-12 16-14-2 4-2 8 0 12 10-8 28-6 34-4-4-8-3-18 5-26z" fill="url(#ffa)"/>
<circle cx="66" cy="68" r="26" fill="url(#ffb)"/><path d="M26 44c10-4 22-2 30 6-8 2-10 8-8 14-10 2-22-6-22-20z" fill="#ffb02e"/><path d="M40 62c2 18 18 30 36 28 14-2 24-12 26-26 6 22-10 46-36 46S24 88 28 62c4 4 8 2 12 0z" fill="#ff5a34" opacity=".85"/><path d="M70 44c10-2 20 4 22 14-6-6-14-6-20-2 2-4 0-8-2-12z" fill="#ffce3a"/></svg>
<svg style="left:602px;top:1951.5px" width="128" height="128" viewBox="0 0 128 128"><defs><linearGradient id="cs1" x1="0" y1="0" x2="0" y2="1"><stop offset="0" stop-color="#000" stop-opacity=".18"/><stop offset="1" stop-color="#000" stop-opacity="0"/></linearGradient></defs><circle cx="64" cy="64" r="57.500" fill="#fff"/>
<path d="M15 33.100A58 58 0 0 1 115.300 37L64 37A27 27 0 0 0 40.600 77.500Z" fill="#db4a3a"/>
<path d="M115.300 37A58 58 0 0 1 61.700 121.900L87.400 77.500A27 27 0 0 0 64 37Z" fill="#f8ca48"/>
<path d="M61.700 121.900A58 58 0 0 1 15 33.100L40.600 77.500A27 27 0 0 0 87.400 77.500Z" fill="#42a45c"/>
<path d="M64 37h51.300l2 7H78z" fill="url(#cs1)"/><path d="M15 33.100l25.600 44.400-7 2z" fill="#000" opacity=".08"/><path d="M87.400 77.500L61.700 121.900l8 0 22-40z" fill="#000" opacity=".07"/>
<circle cx="64" cy="64" r="26.500" fill="#f4f6f8"/><circle cx="64" cy="64" r="21.200" fill="#4a8af4"/></svg>
<svg style="left:738px;top:1951.5px" width="128" height="128" viewBox="0 0 128 128"><rect x="4.500" y="2.500" width="119" height="117" fill="#f29a3e"/><rect x="9.500" y="7.500" width="109" height="107" fill="#311a02"/><text x="64" y="86" font-family="Liberation Sans,sans-serif" font-size="76" fill="#f29a3e" stroke="#f29a3e" stroke-width="2.600" text-anchor="middle" textLength="62" lengthAdjust="spacingAndGlyphs">Ai</text></svg>
<svg style="left:874px;top:1951.5px" width="128" height="128" viewBox="0 0 128 128"><rect x="4.500" y="2.500" width="119" height="117" fill="#5ccbf5"/><rect x="9.500" y="7.500" width="109" height="107" fill="#0b2430"/><text x="64" y="86" font-family="Liberation Sans,sans-serif" font-size="76" fill="#5ccbf5" stroke="#5ccbf5" stroke-width="2.600" text-anchor="middle" textLength="66" lengthAdjust="spacingAndGlyphs">Ps</text></svg>
<svg style="left:1010px;top:1951.5px" width="128" height="128" viewBox="0 0 128 128"><defs><clipPath id="ocW"><rect x="33.500" y="16" width="84.500" height="96" rx="6"/></clipPath></defs><g clip-path="url(#ocW)"><rect x="33" y="16" width="86" height="24" fill="#5aa4ec"/><rect x="33" y="40" width="86" height="24" fill="#3f7fd4"/><rect x="33" y="64" width="86" height="24" fill="#2c63c0"/><rect x="33" y="88" width="86" height="24" fill="#2250a8"/></g><rect x="7.500" y="36" width="56.500" height="56.500" rx="6" fill="#2a5fc0"/><rect x="7.500" y="36" width="56.500" height="56.500" rx="6" fill="none" stroke="rgba(0,0,0,.12)"/><text x="35.500" y="79" font-family="Liberation Sans,sans-serif" font-weight="700" font-size="42" fill="#fff" text-anchor="middle">W</text></svg>
<svg style="left:1146px;top:1951.5px" width="128" height="128" viewBox="0 0 128 128"><defs><clipPath id="ocX"><rect x="33.500" y="16" width="84.500" height="96" rx="6"/></clipPath></defs><g clip-path="url(#ocX)"><rect x="33" y="16" width="86" height="24" fill="#3fa06a"/><rect x="33" y="40" width="86" height="24" fill="#2f8a58"/><rect x="33" y="64" width="86" height="24" fill="#287a4c"/><rect x="33" y="88" width="86" height="24" fill="#1f6640"/><rect x="76" y="16" width="43" height="24" fill="#5fc48a"/><rect x="76" y="40" width="43" height="24" fill="#4aa872"/><rect x="76" y="64" width="43" height="24" fill="#348a58"/></g><rect x="7.500" y="36" width="56.500" height="56.500" rx="6" fill="#1f7044"/><rect x="7.500" y="36" width="56.500" height="56.500" rx="6" fill="none" stroke="rgba(0,0,0,.12)"/><text x="35.500" y="79" font-family="Liberation Sans,sans-serif" font-weight="700" font-size="42" fill="#fff" text-anchor="middle">X</text></svg>
<svg style="left:1282px;top:1951.5px" width="128" height="128" viewBox="0 0 128 128"><circle cx="70" cy="64" r="48.500" fill="#e0663f"/><path d="M70 15.500A48.500 48.500 0 0 1 118.500 64H70z" fill="#f39474"/><path d="M70 64h48.500A48.500 48.500 0 0 1 70 112.500z" fill="#c95a38"/><rect x="7.500" y="36" width="56.500" height="56.500" rx="6" fill="#c44a2a"/><text x="35.500" y="79" font-family="Liberation Sans,sans-serif" font-weight="700" font-size="42" fill="#fff" text-anchor="middle">P</text></svg>
<svg style="left:1418px;top:1951.5px" width="128" height="128" viewBox="0 0 128 128"><defs><linearGradient id="at" x1="0" y1="0" x2="0" y2="1"><stop offset="0" stop-color="#b0dca4"/><stop offset="1" stop-color="#48a678"/></linearGradient></defs><circle cx="64" cy="64" r="56" fill="#eef1ee"/><circle cx="64" cy="64" r="51" fill="url(#at)"/><g fill="none" stroke="#e4f6ea" stroke-width="3"><ellipse cx="64" cy="64" rx="36" ry="13" transform="rotate(-25 64 64)"/><ellipse cx="64" cy="64" rx="36" ry="13" transform="rotate(60 64 64)"/><ellipse cx="64" cy="64" rx="34" ry="13" transform="rotate(100 64 64)"/></g><circle cx="64" cy="64" r="4.500" fill="#e4f6ea"/></svg>
<svg style="left:1554px;top:1951.5px" width="128" height="128" viewBox="0 0 128 128"><defs><linearGradient id="as" x1="0" y1="0" x2="0" y2="1"><stop offset="0" stop-color="#3fb4f8"/><stop offset="1" stop-color="#1f64e6"/></linearGradient></defs><circle cx="64" cy="64" r="56" fill="#eceef2"/><circle cx="64" cy="64" r="51" fill="url(#as)"/><g stroke="#f4f6fa" stroke-width="9" stroke-linecap="round"><path d="M32 74h64"/><path d="M70 32L40 86"/><path d="M58 32l30 54"/></g></svg>
<div style="left:1637px;top:1952.5px;width:48px;height:48px;background:#e9483f;border-radius:50%;box-shadow:0 1px 3px rgba(0,0,0,.3)"></div><span class="t" style="top:1955.5px;font-size:29px;line-height:43px;color:#fff;left:1661px;transform:translateX(-50%);">10</span>
<svg style="left:1690px;top:1951.5px" width="128" height="128" viewBox="0 0 128 128"><defs><linearGradient id="lp" x1="0" y1="0" x2="0" y2="1"><stop offset="0" stop-color="#cdd4d6"/><stop offset="1" stop-color="#858889"/></linearGradient></defs><circle cx="64" cy="64" r="56" fill="#dfe3e6"/><circle cx="64" cy="64" r="51" fill="url(#lp)"/><path d="M97 27c-18 2-32 14-40 30l-16 2-12 12 14 2 18 18-2 12 12-10 2-16c16-10 24-28 24-50z" fill="#4a4c4e"/><circle cx="78" cy="49" r="6" fill="#a8b0b4"/><path d="M46 80c-6 2-12 10-12 20 8-2 16-8 18-14z" fill="#4a4c4e"/></svg>
<svg style="left:1826px;top:1951.5px" width="128" height="128" viewBox="0 0 128 128"><defs><linearGradient id="sp" x1="0" y1="0" x2="0" y2="1"><stop offset="0" stop-color="#d4dadd"/><stop offset="1" stop-color="#84878a"/></linearGradient><linearGradient id="sg" x1="0" y1="0" x2="0" y2="1"><stop offset="0" stop-color="#c0c4c6"/><stop offset="1" stop-color="#7a7d80"/></linearGradient></defs><rect x="9" y="13" width="110" height="102" rx="5" fill="url(#sp)" stroke="#7a7c80" stroke-width="1"/><circle cx="64" cy="64" r="45" fill="#3c3e40"/><g fill="url(#sg)"><rect x="59" y="19" width="10" height="12" rx="1.500" transform="rotate(0.0 64 64)"/><rect x="59" y="19" width="10" height="12" rx="1.500" transform="rotate(22.5 64 64)"/><rect x="59" y="19" width="10" height="12" rx="1.500" transform="rotate(45.0 64 64)"/><rect x="59" y="19" width="10" height="12" rx="1.500" transform="rotate(67.5 64 64)"/><rect x="59" y="19" width="10" height="12" rx="1.500" transform="rotate(90.0 64 64)"/><rect x="59" y="19" width="10" height="12" rx="1.500" transform="rotate(112.5 64 64)"/><rect x="59" y="19" width="10" height="12" rx="1.500" transform="rotate(135.0 64 64)"/><rect x="59" y="19" width="10" height="12" rx="1.500" transform="rotate(157.5 64 64)"/><rect x="59" y="19" width="10" height="12" rx="1.500" transform="rotate(180.0 64 64)"/><rect x="59" y="19" width="10" height="12" rx="1.500" transform="rotate(202.5 64 64)"/><rect x="59" y="19" width="10" height="12" rx="1.500" transform="rotate(225.0 64 64)"/><rect x="59" y="19" width="10" height="12" rx="1.500" transform="rotate(247.5 64 64)"/><rect x="59" y="19" width="10" height="12" rx="1.500" transform="rotate(270.0 64 64)"/><rect x="59" y="19" width="10" height="12" rx="1.500" transform="rotate(292.5 64 64)"/><rect x="59" y="19" width="10" height="12" rx="1.500" transform="rotate(315.0 64 64)"/><rect x="59" y="19" width="10" height="12" rx="1.500" transform="rotate(337.5 64 64)"/></g><circle cx="64" cy="64" r="36" fill="url(#sg)"/><circle cx="64" cy="64" r="28" fill="#4a4c4e"/><g stroke="url(#sg)" stroke-width="7"><path d="M64 64V36M64 64l24 14M64 64L40 78" stroke="#a8acae"/></g><circle cx="64" cy="64" r="5" fill="#c8cccc"/></svg>
<div style="left:1909px;top:1952.5px;width:48px;height:48px;background:#e9483f;border-radius:50%;box-shadow:0 1px 3px rgba(0,0,0,.3)"></div><span class="t" style="top:1955.5px;font-size:29px;line-height:43px;color:#fff;left:1933px;transform:translateX(-50%);">1</span>
<svg style="left:1962px;top:1951.5px" width="128" height="128" viewBox="0 0 128 128"><rect x="10" y="10.500" width="108" height="107" rx="20" fill="#52bd3a"/><path d="M64 26c-22 0-39 14-39 31 0 15 13 28 31 30l-2 12 14-11c20-1 35-14 35-31 0-17-17-31-39-31z" fill="#fff"/><text x="64" y="67" font-family="Liberation Sans,sans-serif" font-weight="700" font-size="25" fill="#4ab534" text-anchor="middle" textLength="52" lengthAdjust="spacingAndGlyphs">LINE</text></svg>
<div style="left:2045px;top:1952.5px;width:48px;height:48px;background:#e9483f;border-radius:50%;box-shadow:0 1px 3px rgba(0,0,0,.3)"></div><span class="t" style="top:1955.5px;font-size:29px;line-height:43px;color:#fff;left:2069px;transform:translateX(-50%);">95</span>
<svg style="left:2098px;top:1951.5px" width="128" height="128" viewBox="0 0 128 128"><defs><linearGradient id="hm" x1="0" y1="0" x2="1" y2="0"><stop offset="0" stop-color="#8e9296"/><stop offset=".35" stop-color="#f6f6f6"/><stop offset=".7" stop-color="#b4b8bc"/><stop offset="1" stop-color="#7c8084"/></linearGradient><linearGradient id="hm2" x1="0" y1="0" x2="0" y2="1"><stop offset="0" stop-color="#fafafa"/><stop offset=".5" stop-color="#c4c8cc"/><stop offset="1" stop-color="#80848a"/></linearGradient></defs><defs><linearGradient id="bpg1" x1="0" y1="0" x2="0" y2="1"><stop offset="0" stop-color="#68b4f4"/><stop offset="1" stop-color="#3486e8"/></linearGradient></defs><g transform="translate(61.100 65.700) rotate(-7.800)"><rect x="-53" y="-42.600" width="106" height="85.200" fill="url(#bpg1)"/><g fill="none" stroke="#dcefff" stroke-width="1.300"><rect x="-48.500" y="-38.500" width="97" height="77"/><path d="M-48.500 31.500h97"/><path d="M-8 -30l4 -3 28 40h-6z"/><path d="M-12 -18l7 2.500-18 46-6 9-1-11z M-14 -13l7 2.500 M-28 26l7 3"/><path d="M-33 2l66-3v8l-66 3z"/><path d="M26 14c6 4 8 12 6 18" /></g><text x="28" y="29.500" font-family="Liberation Sans,sans-serif" font-size="6" font-weight="700" fill="#dcefff" textLength="19">XCODE</text><rect x="-46" y="33.500" width="3.500" height="3.500" fill="#dcefff"/></g><path d="M69 12c6-5 16-7 24-6 8 1 14 5 18 9l6-2c3-1 6 0 8 2l1 10c-2 2-5 3-8 2l-6-3c-4 1-6 3-7 6L97 56 88 53l4-22c1-8-2-14-9-17-4-2-9-2-14-2z" fill="url(#hm2)" stroke="#6c7074" stroke-width=".8"/><path d="M88 52l10 3-15 58c-1.500 5-12 3-11-3z" fill="#26282c"/><path d="M90 53l3 1-15 57c-.5 1-2 1-2.500 0z" fill="#4a4c50" opacity=".6"/></svg>
<svg style="left:2234px;top:1951.5px" width="128" height="128" viewBox="0 0 128 128"><defs><linearGradient id="bpg2" x1="0" y1="0" x2="0" y2="1"><stop offset="0" stop-color="#68b4f4"/><stop offset="1" stop-color="#3486e8"/></linearGradient></defs><g transform="translate(61.100 65.700) rotate(-7.800)"><rect x="-53" y="-42.600" width="106" height="85.200" fill="url(#bpg2)"/><g fill="none" stroke="#dcefff" stroke-width="1.300"><rect x="-48.500" y="-38.500" width="97" height="77"/><path d="M-48.500 31.500h97"/><path d="M-8 -30l4 -3 28 40h-6z"/><path d="M-12 -18l7 2.500-18 46-6 9-1-11z M-14 -13l7 2.500 M-28 26l7 3"/><path d="M-33 2l66-3v8l-66 3z"/><path d="M26 14c6 4 8 12 6 18" /></g><rect x="-46" y="33.500" width="3.500" height="3.500" fill="#dcefff"/></g><g transform="translate(97.100 80.200) rotate(14.500)"><rect x="-16.700" y="-32" width="33.400" height="64" rx="6" fill="#161618" stroke="#3c3c40" stroke-width="1"/><rect x="-14" y="-24" width="28" height="47" fill="#242428"/><path d="M-14 -24h28L-6 23h-8z" fill="#2e2e33" opacity=".6"/></g></svg>
<div style="left:2398px;top:1980px;width:2px;height:82px;background:rgba(110,90,70,.55);"></div>
<svg style="left:2428px;top:1951.5px" width="128" height="128" viewBox="0 0 128 128"><defs><linearGradient id="ml" x1="0" y1="0" x2="0" y2="1"><stop offset="0" stop-color="#3f82e4"/><stop offset=".55" stop-color="#6fa8ea"/><stop offset="1" stop-color="#c4dcf4"/></linearGradient><path id="pm" d="M83 95.700A18 18 0 0 1 119 95.700"/><path id="pm2" d="M77 95.700A24 24 0 0 0 125 95.700"/><mask id="sm"><rect x="-60" y="-70" width="120" height="140" fill="#000"/><rect x="-43" y="-52.400" width="86" height="104.800" fill="#fff"/><g fill="#000"><circle cx="-43.0" cy="-52.400" r="2.300"/><circle cx="-43.0" cy="52.400" r="2.300"/><circle cx="-36.4" cy="-52.400" r="2.300"/><circle cx="-36.4" cy="52.400" r="2.300"/><circle cx="-29.8" cy="-52.400" r="2.300"/><circle cx="-29.8" cy="52.400" r="2.300"/><circle cx="-23.2" cy="-52.400" r="2.300"/><circle cx="-23.2" cy="52.400" r="2.300"/><circle cx="-16.6" cy="-52.400" r="2.300"/><circle cx="-16.6" cy="52.400" r="2.300"/><circle cx="-10.0" cy="-52.400" r="2.300"/><circle cx="-10.0" cy="52.400" r="2.300"/><circle cx="-3.4" cy="-52.400" r="2.300"/><circle cx="-3.4" cy="52.400" r="2.300"/><circle cx="3.2" cy="-52.400" r="2.300"/><circle cx="3.2" cy="52.400" r="2.300"/><circle cx="9.8" cy="-52.400" r="2.300"/><circle cx="9.8" cy="52.400" r="2.300"/><circle cx="16.4" cy="-52.400" r="2.300"/><circle cx="16.4" cy="52.400" r="2.300"/><circle cx="23.0" cy="-52.400" r="2.300"/><circle cx="23.0" cy="52.400" r="2.300"/><circle cx="29.6" cy="-52.400" r="2.300"/><circle cx="29.6" cy="52.400" r="2.300"/><circle cx="36.2" cy="-52.400" r="2.300"/><circle cx="36.2" cy="52.400" r="2.300"/><circle cx="42.8" cy="-52.400" r="2.300"/><circle cx="42.8" cy="52.400" r="2.300"/><circle cx="-43" cy="-52.4" r="2.300"/><circle cx="43" cy="-52.4" r="2.300"/><circle cx="-43" cy="-45.9" r="2.300"/><circle cx="43" cy="-45.9" r="2.300"/><circle cx="-43" cy="-39.3" r="2.300"/><circle cx="43" cy="-39.3" r="2.300"/><circle cx="-43" cy="-32.8" r="2.300"/><circle cx="43" cy="-32.8" r="2.300"/><circle cx="-43" cy="-26.2" r="2.300"/><circle cx="43" cy="-26.2" r="2.300"/><circle cx="-43" cy="-19.6" r="2.300"/><circle cx="43" cy="-19.6" r="2.300"/><circle cx="-43" cy="-13.1" r="2.300"/><circle cx="43" cy="-13.1" r="2.300"/><circle cx="-43" cy="-6.5" r="2.300"/><circle cx="43" cy="-6.5" r="2.300"/><circle cx="-43" cy="0.0" r="2.300"/><circle cx="43" cy="0.0" r="2.300"/><circle cx="-43" cy="6.5" r="2.300"/><circle cx="43" cy="6.5" r="2.300"/><circle cx="-43" cy="13.1" r="2.300"/><circle cx="43" cy="13.1" r="2.300"/><circle cx="-43" cy="19.6" r="2.300"/><circle cx="43" cy="19.6" r="2.300"/><circle cx="-43" cy="26.2" r="2.300"/><circle cx="43" cy="26.2" r="2.300"/><circle cx="-43" cy="32.7" r="2.300"/><circle cx="43" cy="32.7" r="2.300"/><circle cx="-43" cy="39.3" r="2.300"/><circle cx="43" cy="39.3" r="2.300"/><circle cx="-43" cy="45.9" r="2.300"/><circle cx="43" cy="45.9" r="2.300"/><circle cx="-43" cy="52.4" r="2.300"/><circle cx="43" cy="52.4" r="2.300"/></g></mask></defs>
<g transform="translate(67.900 62.900) rotate(-8.700)"><rect x="-44" y="-53.400" width="88" height="106.800" fill="#fcfcfc" mask="url(#sm)"/><rect x="-35.600" y="-44.800" width="71.200" height="89.600" fill="url(#ml)"/></g>
<path d="M33 29c2-3 7-4 10-2 8 6 13 16 17 22l7 10-5 7c-6-3-12-7-16-13-6-8-10-16-13-24z" fill="#e6e2da" stroke="#6a5238" stroke-width="1.300"/><path d="M36 30l4 12M40 28l6 16M45 31l6 16" stroke="#9a8a74" stroke-width=".8"/>
<path d="M66 62c6 2 12 6 18 11 6 5 11 10 14 15-3 3-8 4-12 2-8-3-15-9-20-15l-5-8z" fill="#d2c8b6" stroke="#6a5238" stroke-width="1.300"/>
<path d="M41.600 75.300L56.500 70.300 61.400 80.200 51.500 88.900 42.800 84z" fill="#b08a50"/><path d="M57 60l10-2 2 6-6 12-8-4z" fill="#c8a46c"/><circle cx="67.600" cy="60.400" r="2.200" fill="#4a3a2a"/>
<g fill="none" stroke="#6e6e74" opacity=".75"><circle cx="101" cy="95.700" r="28" stroke-width="1.600"/><circle cx="101" cy="95.700" r="25.500" stroke-width="1"/><circle cx="101" cy="95.700" r="15" stroke-width="1.400"/><circle cx="101" cy="95.700" r="12.800" stroke-width=".8"/></g>
<path d="M103 90.500c1-1.500 2.600-2.400 3.600-2.400.1 1.200-.4 2.500-1.100 3.300-.8.900-2 1.600-3.100 1.500-.2-1 .2-1.800.6-2.400zM108 99.500c-.5 1.500-1.200 2.800-2 3.800-.8 1-1.700 1.600-2.600 1.600-.9 0-1.500-.5-2.500-.5s-1.700.5-2.500.5c-1 0-1.800-.8-2.700-1.900-1.700-2.300-2.500-6.300-1-8.800.8-1.400 2.300-2.200 3.600-2.200 1 0 2 .6 2.600.6.600 0 1.800-.7 3-.6 1.200 0 2.500.6 3.300 1.800-2.300 1.400-2 4.700.8 5.700z" fill="#5a7ab8" opacity=".85"/>
<text font-family="Liberation Sans,sans-serif" font-size="6.200" font-weight="700" fill="#6e6e74" opacity=".8" letter-spacing=".8" text-anchor="middle"><textPath href="#pm" startOffset="50%">HELLO FROM</textPath></text><text font-family="Liberation Sans,sans-serif" font-size="6.200" font-weight="700" fill="#6e6e74" opacity=".8" letter-spacing=".8" text-anchor="middle"><textPath href="#pm2" startOffset="50%">CALIFORNIA</textPath></text></svg>
<svg style="left:2568px;top:1951.5px" width="128" height="128" viewBox="0 0 128 128"><defs><linearGradient id="pv" x1="0" y1="0" x2="0" y2="1"><stop offset="0" stop-color="#9fb8ee"/><stop offset=".44" stop-color="#c4d4f2"/><stop offset=".45" stop-color="#22469a"/><stop offset=".62" stop-color="#5a80c0"/><stop offset=".8" stop-color="#dce8f4"/><stop offset="1" stop-color="#b8c8d8"/></linearGradient><linearGradient id="lc" x1="0" y1="0" x2="1" y2="0"><stop offset="0" stop-color="#5a564e"/><stop offset=".5" stop-color="#8a867c"/><stop offset="1" stop-color="#4e4a44"/></linearGradient><pattern id="ck" width="5" height="5" patternUnits="userSpaceOnUse"><rect width="5" height="5" fill="#a48c5c"/><circle cx="1.500" cy="1.500" r="1.200" fill="#c4ac7c"/><circle cx="4" cy="3.800" r="1" fill="#7e683e"/></pattern></defs>
<rect x="20" y="14.500" width="94.200" height="58" fill="#fcfcfc" stroke="#d8d8d8" stroke-width=".8"/><rect x="23" y="17.500" width="88.200" height="52" fill="url(#ck)"/>
<g transform="translate(56.500 67) rotate(-9.500)"><rect x="-47" y="-37.500" width="94" height="75" fill="#fdfdfd" stroke="#d4d4d4" stroke-width=".8"/><rect x="-43.500" y="-34" width="87" height="68" fill="url(#pv)"/><path d="M-43.500 34v-6c8-8 22-12 34-6l16 8 10-2 27 0v6z" fill="#7c6650"/><path d="M-40 2c6-2 12 0 16 4l-8 4-8-2z" fill="#5a4a40"/></g>
<path d="M74.500 76v30c0 14 47 14 47 0V76z" fill="url(#lc)"/><ellipse cx="98" cy="75.300" rx="23.500" ry="20" fill="#b8bcc0" stroke="#e4e6e8" stroke-width="3"/><ellipse cx="98" cy="76.500" rx="19" ry="15.500" fill="#a8b8cc"/><path d="M80 80c4-10 30-12 36-2 0 8-6 14-18 14s-18-6-18-12z" fill="#e8eef4"/><path d="M82 84c6-6 26-6 32 0-3 6-10 9-16 9s-13-3-16-9z" fill="#8a7058"/></svg>
<svg style="left:2704px;top:1951.5px" width="128" height="128" viewBox="0 0 128 128"><rect x="4.500" y="2.500" width="119" height="117" fill="#f29a3e"/><rect x="9.500" y="7.500" width="109" height="107" fill="#311a02"/><text x="64" y="86" font-family="Liberation Sans,sans-serif" font-size="76" fill="#f29a3e" stroke="#f29a3e" stroke-width="2.600" text-anchor="middle" textLength="62" lengthAdjust="spacingAndGlyphs">Ai</text></svg>
<div style="left:2866px;top:1960px;width:2px;height:120px;background:rgba(80,100,130,.6);"></div>
<svg style="left:2901px;top:1951.5px" width="128" height="128" viewBox="0 0 128 128"><defs><pattern id="gr" width="4" height="4" patternUnits="userSpaceOnUse"><rect width="4" height="4" fill="#dde1e6"/><path d="M0 0h4M0 0v4" stroke="#c4cad2" stroke-width=".8"/></pattern></defs><path d="M23.200 4h56l7 6v8H23.200z" fill="url(#gr)" stroke="#c8ccd0" stroke-width=".6"/><rect x="17" y="13.300" width="96" height="89.200" fill="#fbfbfb" stroke="#d0d4d8" stroke-width=".8"/><rect x="21" y="16" width="88" height="84" fill="#f4f4f4" stroke="#dcdcdc" stroke-width=".8"/><rect x="25.600" y="13.900" width="78.800" height="109.700" fill="#fff" stroke="#d0d0d0" stroke-width=".8"/><rect x="30" y="20.100" width="69.400" height="98.600" fill="#000"/>
<g fill="#c6c6ca"><path d="M52 50l8-9 12-3 10 6 8 10 4 12-3 10-7 4-3-8-6-2-4 6 2 12-6 4-8-2-2-8-8 4-8-4-2-10 6-12 8-6z"/></g><g fill="#ececf0"><path d="M58 46l10-5 8 6-4 9-10 1zM44 70l10-6 6 8-4 8-10-2zM76 60l8 2 2 8-6 4-5-6zM64 80l6 2 0 8-6 0z"/></g><g fill="#8e8e94"><path d="M66 58l8 2-2 6-8-2zM52 62l4 6-6 2z"/></g></svg>
<svg style="left:3037px;top:1951.5px" width="128" height="128" viewBox="0 0 128 128"><defs><linearGradient id="tr" x1="0" y1="0" x2="1" y2="0"><stop offset="0" stop-color="#d4d6d8"/><stop offset=".25" stop-color="#eeeeee"/><stop offset=".6" stop-color="#f2f2f2"/><stop offset="1" stop-color="#cfd3d8"/></linearGradient><clipPath id="tc"><path d="M19 17h92v14H19z M19 0h92v24H19z"/></clipPath></defs>
<ellipse cx="64.800" cy="17" rx="45.500" ry="7.400" fill="#b4b8bc"/>
<g><path d="M27 22l6-14 14-5 10 6 6-4 10-3 10 8 10-2 8 14-6 8H32z" fill="#e2e2e2" stroke="#aaa" stroke-width=".8"/><path d="M38 12l10 10-6 6-8-6zM76 8l8 6-2 12-10 2z" fill="#8c8c90"/><path d="M52 16l14 4-4 8-12-2z" fill="#3aa8d8"/><path d="M58 18l8 2-3 6z" fill="#58b848"/><path d="M72 14l12 6-4 8-10-4z" fill="#28406c"/><path d="M74 22l8 4-3 4-6-2z" fill="#d87a2a"/><path d="M44 6l8 4-4 8zM66 4l6 2 2 10-6-2z" fill="#fafafa"/></g>
<path d="M19.300 17c0 8 91 8 91 0l-11.500 96c-1.500 11-66.500 11-68 0z" fill="url(#tr)" opacity=".94"/><path d="M19.300 17c0 8 91 8 91 0" fill="none" stroke="#fcfcfc" stroke-width="2" opacity=".9"/><path d="M19.300 17c0-8 91-8 91 0" fill="none" stroke="#d8dadc" stroke-width="1.600"/></svg>
<div style="left:254px;top:2088px;width:8px;height:8px;background:#1c1c22;border-radius:50%"></div>
<div style="left:526px;top:2088px;width:8px;height:8px;background:#1c1c22;border-radius:50%"></div>
<div style="left:798px;top:2088px;width:8px;height:8px;background:#1c1c22;border-radius:50%"></div>
<div style="left:1886px;top:2088px;width:8px;height:8px;background:#1c1c22;border-radius:50%"></div>
<div style="left:2022px;top:2088px;width:8px;height:8px;background:#1c1c22;border-radius:50%"></div>
<div style="left:2628px;top:2088px;width:8px;height:8px;background:#1c1c22;border-radius:50%"></div>
<div style="left:2764px;top:2088px;width:8px;height:8px;background:#1c1c22;border-radius:50%"></div>
</body></html>
